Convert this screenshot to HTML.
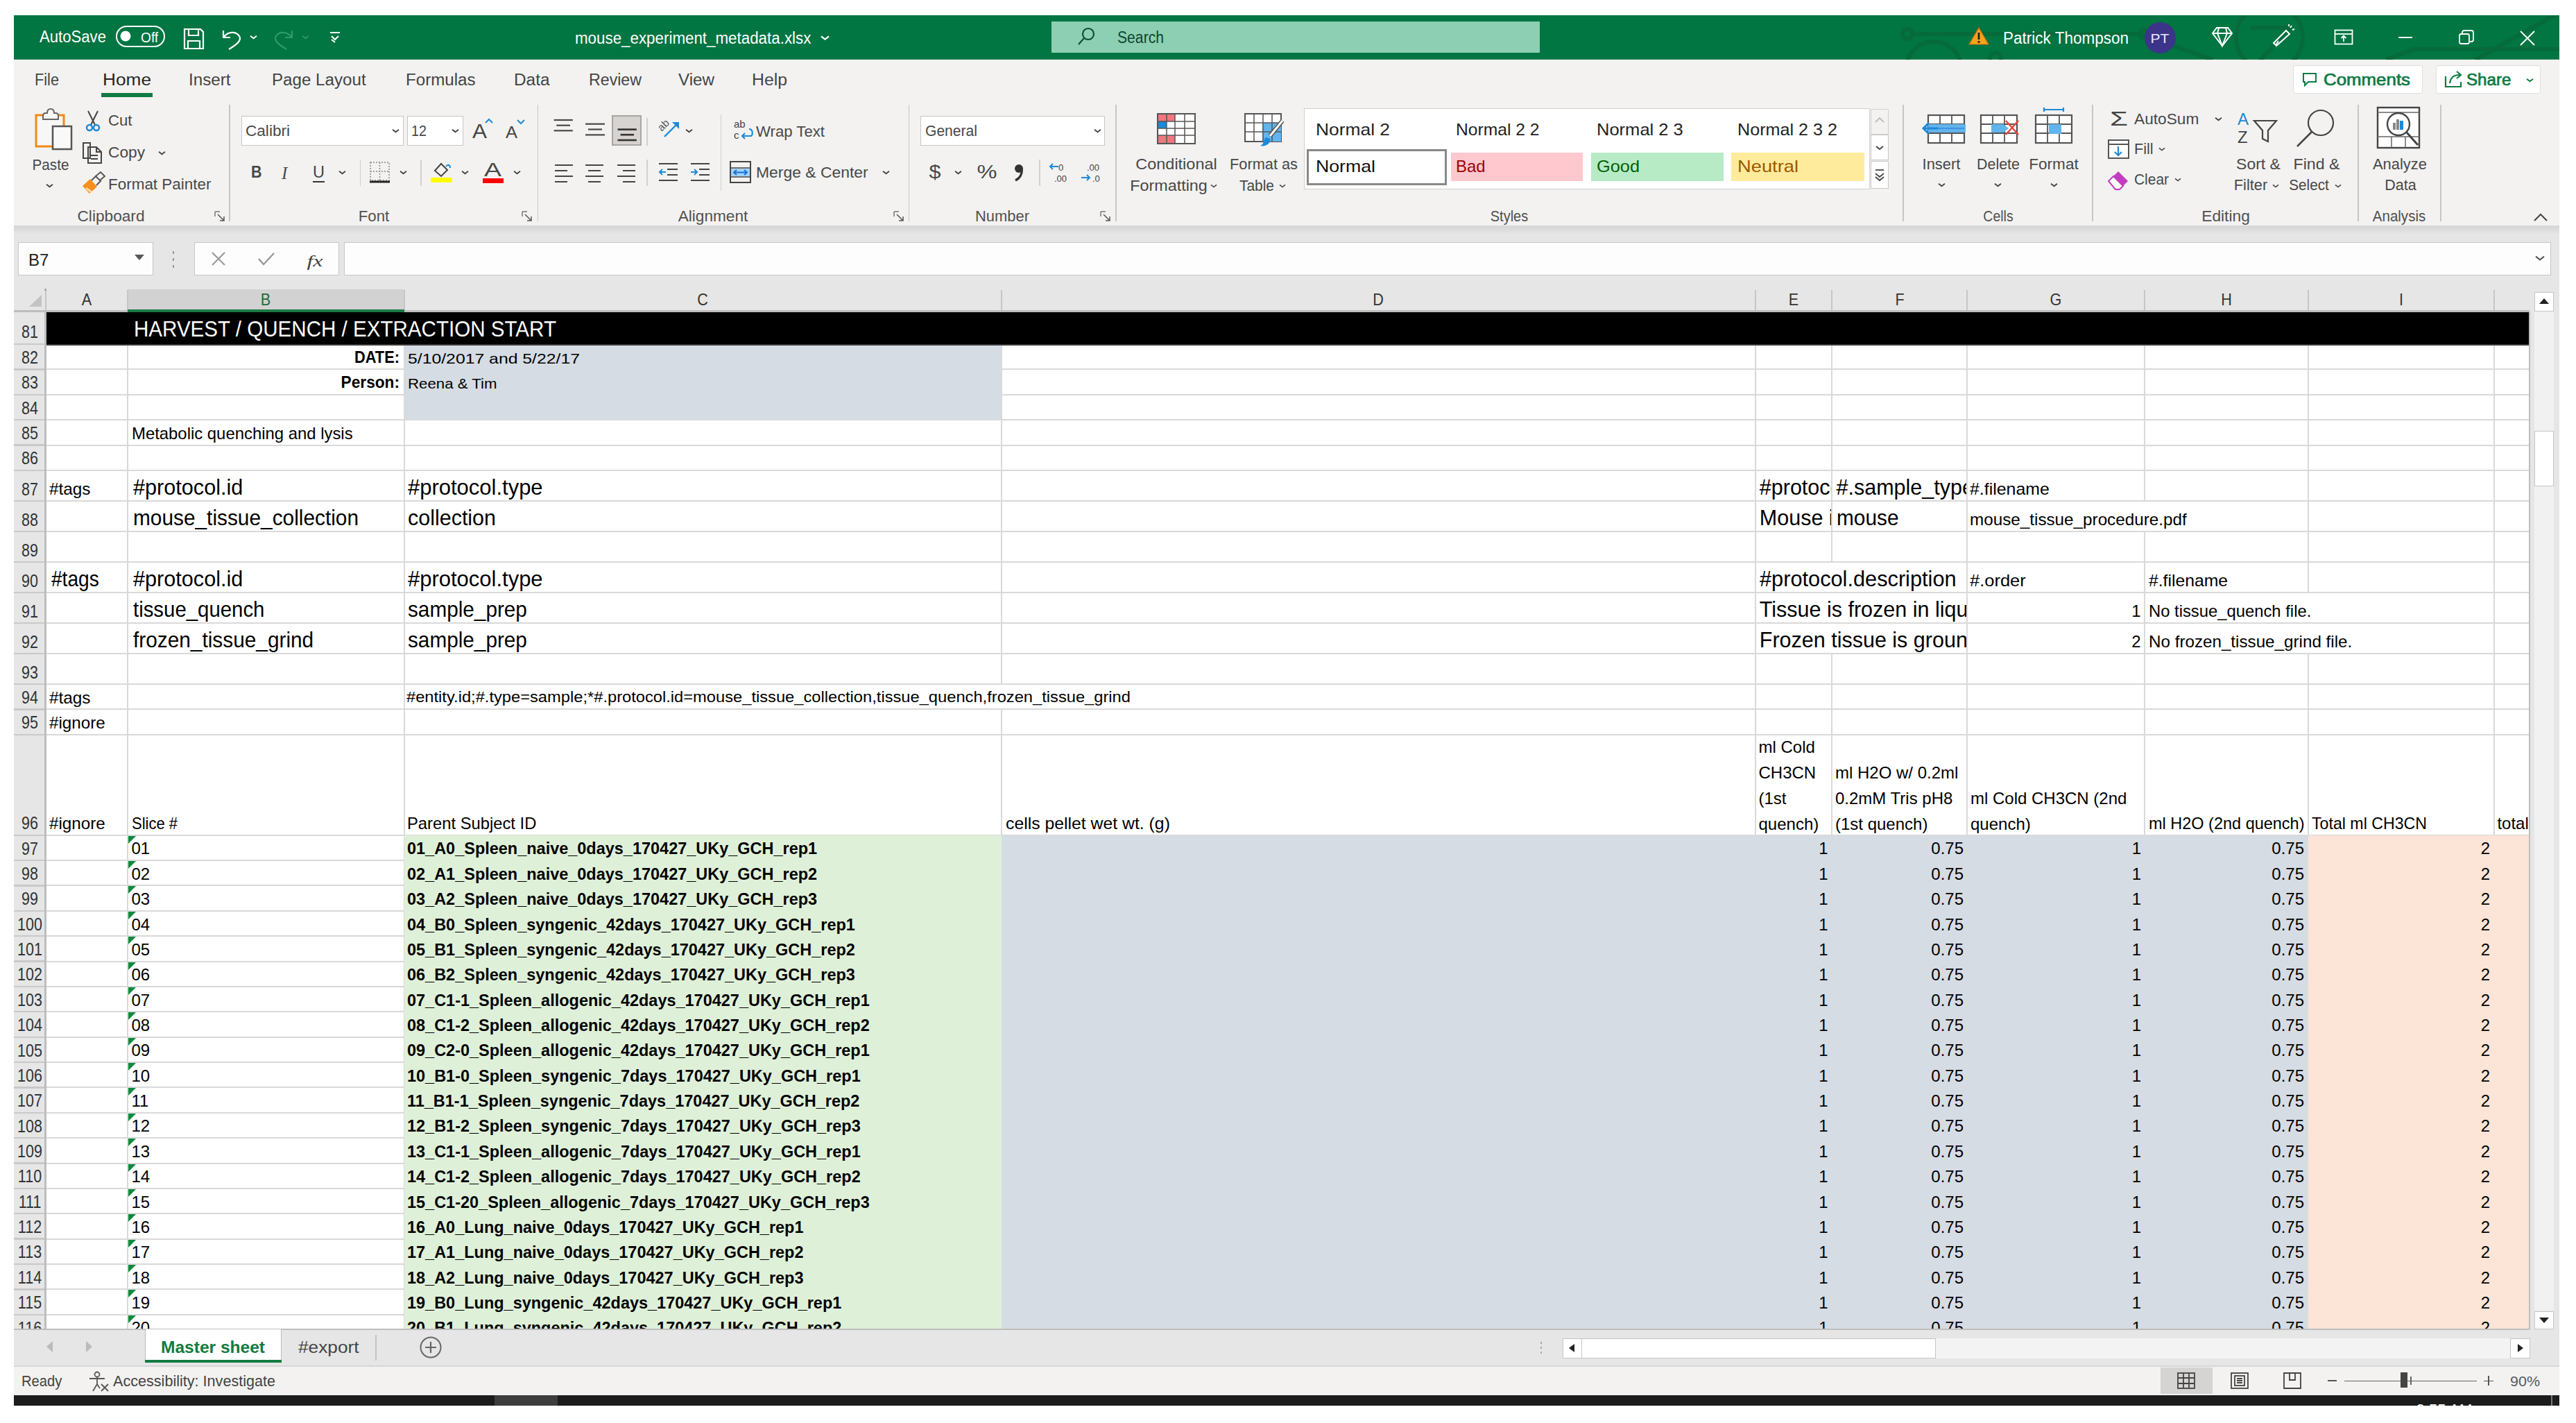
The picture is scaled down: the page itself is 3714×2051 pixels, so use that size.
<!DOCTYPE html><html><head><meta charset="utf-8"><title>Excel</title><style>
html,body{margin:0;padding:0;background:#fff;width:3714px;height:2051px;overflow:hidden;position:relative;font-family:'Liberation Sans', sans-serif;}
.a{position:absolute;}
.t{position:absolute;white-space:pre;font-family:'Liberation Sans', sans-serif;}
svg.a{overflow:visible}
</style></head><body><div class="a" style="left:20.0px;top:22.0px;width:3670.0px;height:64.0px;background:#017542;"></div>
<div class="a" style="left:20.0px;top:85.0px;width:3670.0px;height:1.0px;background:#2e8b5e;"></div>
<svg class="a" style="left:2700.0px;top:22.0px;overflow:hidden" width="990" height="64" viewBox="0 0 990 64">
      <g stroke="#066a3b" stroke-width="6" fill="none">
        <path d="M56 27 H385 L490 64"/><circle cx="50" cy="27" r="7"/><circle cx="391" cy="27" r="6"/>
        <circle cx="88" cy="78" r="40"/>
        <circle cx="177" cy="62" r="8"/>
        <circle cx="572" cy="32" r="48"/>
        <path d="M545 18 H600 L555 70"/>
        <path d="M869 64 L990 -4"/>
        <path d="M740 64 L780 49 H990"/>
      </g></svg>
<div class="t" style="left:57.0px;top:41.8px;font-size:23px;line-height:23px;color:#fff;transform:scaleX(0.9624);transform-origin:0 0;">AutoSave</div>
<div class="a" style="left:166.6px;top:36.5px;width:71.5px;height:31.0px;box-sizing:border-box;border:2px solid #fff;border-radius:16px;"></div>
<svg class="a" style="left:172.0px;top:43.0px;" width="18" height="18" viewBox="0 0 18 18"><circle cx="9" cy="9" r="7.5" fill="#fff"/></svg>
<div class="t" style="left:202.5px;top:44.0px;font-size:20px;line-height:20px;color:#fff;transform:scaleX(0.9577);transform-origin:0 0;">Off</div>
<svg class="a" style="left:264.0px;top:40.0px;" width="31" height="32" viewBox="0 0 31 32"><g fill="none" stroke="#fff" stroke-width="2.2"><path d="M2 2H25L29 6V30H2Z"/><path d="M8 2V11H22V2"/><path d="M7 30V19H24V30"/></g></svg>
<svg class="a" style="left:318.0px;top:40.0px;" width="32" height="32" viewBox="0 0 32 32"><g fill="none" stroke="#fff" stroke-width="2.2"><path d="M4 4V14H14"/><path d="M5 13C10 6 22 4 27 12C30 17 27 22 12 31"/></g></svg>
<svg class="a" style="left:359.1px;top:48.5px;" width="13.0" height="9.0" viewBox="0 0 13.0 9.0"><path d="M2 2.7 L6.5 6.3 L11.0 2.7" fill="none" stroke="#fff" stroke-width="1.8"/></svg>
<svg class="a" style="left:393.0px;top:40.0px;" width="32" height="32" viewBox="0 0 32 32"><g fill="none" stroke="#2f9a68" stroke-width="2.2"><path d="M28 4V14H18"/><path d="M27 13C22 6 10 4 5 12C2 17 5 22 20 31"/></g></svg>
<svg class="a" style="left:433.5px;top:48.5px;" width="13.0" height="9.0" viewBox="0 0 13.0 9.0"><path d="M2 2.7 L6.5 6.3 L11.0 2.7" fill="none" stroke="#2f9a68" stroke-width="1.8"/></svg>
<svg class="a" style="left:474.0px;top:44.0px;" width="18" height="18" viewBox="0 0 18 18"><g fill="none" stroke="#fff" stroke-width="2"><path d="M2 3H16"/><path d="M4 8L9 13L14 8"/><path d="M4 13L9 17"/></g></svg>
<div class="t" style="left:828.6px;top:43.5px;font-size:23px;line-height:23px;color:#fff;transform:scaleX(0.9717);transform-origin:0 0;">mouse_experiment_metadata.xlsx</div>
<svg class="a" style="left:1181.5px;top:48.5px;" width="15.0" height="11.0" viewBox="0 0 15.0 11.0"><path d="M2 3.3 L7.5 7.7 L13.0 3.3" fill="none" stroke="#fff" stroke-width="2.2"/></svg>
<div class="a" style="left:1515.5px;top:30.5px;width:704.5px;height:45.5px;background:#8ccfb2;"></div>
<svg class="a" style="left:1552.0px;top:38.0px;" width="30" height="30" viewBox="0 0 30 30"><g fill="none" stroke="#0e4d31" stroke-width="2.2"><circle cx="17" cy="11" r="8"/><path d="M11 17L3 26"/></g></svg>
<div class="t" style="left:1611.0px;top:42.5px;font-size:23px;line-height:23px;color:#0e4630;transform:scaleX(0.9194);transform-origin:0 0;">Search</div>
<svg class="a" style="left:2838.0px;top:38.0px;" width="30" height="28" viewBox="0 0 30 28"><path d="M15 2L29 26H1Z" fill="#f7a21b" stroke="#c96a10" stroke-width="1.2"/><rect x="13.6" y="9" width="2.8" height="10" fill="#222"/><rect x="13.6" y="21" width="2.8" height="2.8" fill="#222"/></svg>
<div class="t" style="left:2888.0px;top:43.5px;font-size:23px;line-height:23px;color:#fff;transform:scaleX(0.9787);transform-origin:0 0;">Patrick Thompson</div>
<svg class="a" style="left:3091.6px;top:31.6px;" width="45" height="45" viewBox="0 0 45 45"><circle cx="22.5" cy="22.5" r="22.5" fill="#3b3489"/></svg>
<div class="t" style="left:3114.0px;top:45.9px;font-size:19px;line-height:19px;color:#e8e6ff;transform:scaleX(1.1120) translateX(-50%);transform-origin:0 0;">PT</div>
<svg class="a" style="left:3188.0px;top:38.0px;" width="32" height="30" viewBox="0 0 32 30"><g fill="none" stroke="#fff" stroke-width="2"><path d="M8 2H24L30 10L16 28L2 10Z"/><path d="M2 10H30M11 2L9 10L16 28L23 10L21 2"/></g></svg>
<svg class="a" style="left:3276.0px;top:35.0px;" width="34" height="34" viewBox="0 0 34 34"><g fill="none" stroke="#fff" stroke-width="2"><path d="M6 31L2 27L20 9L25 14Z"/><path d="M5 30L9 24"/><path d="M26 5L28 2M29 8L32 7M24 3L24 0"/></g></svg>
<svg class="a" style="left:3365.0px;top:42.0px;" width="28" height="24" viewBox="0 0 28 24"><g fill="none" stroke="#fff" stroke-width="1.8"><rect x="1.5" y="1.5" width="25" height="20"/><path d="M1.5 7H26.5"/><path d="M14 18V10M10.5 13L14 9.5L17.5 13"/></g></svg>
<div class="a" style="left:3458.0px;top:53.0px;width:20.0px;height:1.8px;background:#fff;"></div>
<svg class="a" style="left:3544.0px;top:42.0px;" width="24" height="24" viewBox="0 0 24 24"><g fill="none" stroke="#fff" stroke-width="1.8"><rect x="2" y="7" width="14" height="14" rx="2.5"/><path d="M6 7V5C6 3 7 2 9 2H19C21 2 22 3 22 5V15C22 17 21 18 19 18H16"/></g></svg>
<svg class="a" style="left:3632.0px;top:43.0px;" width="24" height="24" viewBox="0 0 24 24"><g stroke="#fff" stroke-width="1.8"><path d="M2 2L22 22M22 2L2 22"/></g></svg>
<div class="a" style="left:20.0px;top:86.0px;width:3670.0px;height:240.0px;background:#f3f2f1;"></div>
<div class="a" style="left:20.0px;top:325.0px;width:3670.0px;height:1.5px;background:#dcdad8;"></div>
<div class="a" style="left:330.2px;top:151.0px;width:1.5px;height:168.0px;background:#c8c6c4;"></div>
<div class="a" style="left:774.8px;top:151.0px;width:1.5px;height:168.0px;background:#c8c6c4;"></div>
<div class="a" style="left:1309.7px;top:151.0px;width:1.5px;height:168.0px;background:#c8c6c4;"></div>
<div class="a" style="left:1608.2px;top:151.0px;width:1.5px;height:168.0px;background:#c8c6c4;"></div>
<div class="a" style="left:2743.2px;top:151.0px;width:1.5px;height:168.0px;background:#c8c6c4;"></div>
<div class="a" style="left:3016.2px;top:151.0px;width:1.5px;height:168.0px;background:#c8c6c4;"></div>
<div class="a" style="left:3399.2px;top:151.0px;width:1.5px;height:168.0px;background:#c8c6c4;"></div>
<div class="a" style="left:3518.2px;top:151.0px;width:1.5px;height:168.0px;background:#c8c6c4;"></div>
<div class="t" style="left:159.5px;top:301.3px;font-size:22px;line-height:22px;color:#505050;transform:scaleX(1.0300) translateX(-50%);transform-origin:0 0;">Clipboard</div>
<div class="t" style="left:539.0px;top:301.3px;font-size:22px;line-height:22px;color:#505050;transform:scaleX(1.0106) translateX(-50%);transform-origin:0 0;">Font</div>
<div class="t" style="left:1027.7px;top:301.3px;font-size:22px;line-height:22px;color:#505050;transform:scaleX(1.0271) translateX(-50%);transform-origin:0 0;">Alignment</div>
<div class="t" style="left:1445.0px;top:301.3px;font-size:22px;line-height:22px;color:#505050;transform:scaleX(0.9968) translateX(-50%);transform-origin:0 0;">Number</div>
<div class="t" style="left:2176.3px;top:301.3px;font-size:22px;line-height:22px;color:#505050;transform:scaleX(0.9095) translateX(-50%);transform-origin:0 0;">Styles</div>
<div class="t" style="left:2881.0px;top:301.3px;font-size:22px;line-height:22px;color:#505050;transform:scaleX(0.8874) translateX(-50%);transform-origin:0 0;">Cells</div>
<div class="t" style="left:3209.0px;top:301.3px;font-size:22px;line-height:22px;color:#505050;transform:scaleX(1.0345) translateX(-50%);transform-origin:0 0;">Editing</div>
<div class="t" style="left:3458.7px;top:301.3px;font-size:22px;line-height:22px;color:#505050;transform:scaleX(0.9338) translateX(-50%);transform-origin:0 0;">Analysis</div>
<svg class="a" style="left:309.0px;top:304.0px;" width="16" height="16" viewBox="0 0 16 16"><path d="M1 1H8M1 1V8" stroke="#777" stroke-width="1.5" fill="none"/><path d="M5 5L14 14M14 8V14H8" stroke="#555" stroke-width="1.5" fill="none"/></svg>
<svg class="a" style="left:752.0px;top:304.0px;" width="16" height="16" viewBox="0 0 16 16"><path d="M1 1H8M1 1V8" stroke="#777" stroke-width="1.5" fill="none"/><path d="M5 5L14 14M14 8V14H8" stroke="#555" stroke-width="1.5" fill="none"/></svg>
<svg class="a" style="left:1288.0px;top:304.0px;" width="16" height="16" viewBox="0 0 16 16"><path d="M1 1H8M1 1V8" stroke="#777" stroke-width="1.5" fill="none"/><path d="M5 5L14 14M14 8V14H8" stroke="#555" stroke-width="1.5" fill="none"/></svg>
<svg class="a" style="left:1586.0px;top:304.0px;" width="16" height="16" viewBox="0 0 16 16"><path d="M1 1H8M1 1V8" stroke="#777" stroke-width="1.5" fill="none"/><path d="M5 5L14 14M14 8V14H8" stroke="#555" stroke-width="1.5" fill="none"/></svg>
<svg class="a" style="left:48.0px;top:155.0px;" width="60" height="64" viewBox="0 0 60 64"><g>
      <rect x="4" y="11" width="40" height="45" fill="#f7f7f7" stroke="#f28a14" stroke-width="3"/>
      <path d="M14 17V12C14 9 16 8 18 8H20C20 4 22 2 25 2C28 2 30 4 30 8H32C34 8 36 9 36 12V17Z" fill="#f7f7f7" stroke="#666" stroke-width="2"/>
      <rect x="28" y="27" width="27" height="33" fill="#f9f9f9" stroke="#555" stroke-width="2.5"/>
    </g></svg>
<div class="t" style="left:73.0px;top:226.9px;font-size:22px;line-height:22px;color:#484848;transform:scaleX(0.9420) translateX(-50%);transform-origin:0 0;">Paste</div>
<svg class="a" style="left:65.1px;top:262.5px;" width="13.0" height="9.0" viewBox="0 0 13.0 9.0"><path d="M2 2.7 L6.5 6.3 L11.0 2.7" fill="none" stroke="#444" stroke-width="1.8"/></svg>
<svg class="a" style="left:122.0px;top:158.0px;" width="24" height="32" viewBox="0 0 24 32"><g fill="none" stroke="#444" stroke-width="2"><path d="M5 2L15 22M19 2L9 22"/></g><circle cx="7" cy="26" r="4" fill="none" stroke="#1c8ad8" stroke-width="2.5"/><circle cx="17" cy="26" r="4" fill="none" stroke="#1c8ad8" stroke-width="2.5"/></svg>
<div class="t" style="left:155.5px;top:162.8px;font-size:22px;line-height:22px;color:#484848;transform:scaleX(1.0073);transform-origin:0 0;">Cut</div>
<svg class="a" style="left:117.0px;top:203.0px;" width="34" height="34" viewBox="0 0 34 34"><g fill="none" stroke="#444" stroke-width="2"><path d="M3 3H13V25H3Z"/><path d="M10 9H22L29 16V32H10Z"/><path d="M22 9V16H29"/><path d="M14 21H24M14 26H24"/></g></svg>
<div class="t" style="left:155.5px;top:209.3px;font-size:22px;line-height:22px;color:#484848;transform:scaleX(1.0319);transform-origin:0 0;">Copy</div>
<svg class="a" style="left:226.5px;top:215.5px;" width="13.0" height="9.0" viewBox="0 0 13.0 9.0"><path d="M2 2.7 L6.5 6.3 L11.0 2.7" fill="none" stroke="#444" stroke-width="1.8"/></svg>
<svg class="a" style="left:118.0px;top:246.0px;" width="34" height="36" viewBox="0 0 34 36"><path d="M1 22L12 12L22 23L11 33Z" fill="#f7901e"/><path d="M6 25L14 31" stroke="#ffd9a8" stroke-width="3"/><g fill="none" stroke="#555" stroke-width="2"><path d="M14 14L20 8L27 15L21 21"/><path d="M20 8L27 2L33 8L26 14"/></g></svg>
<div class="t" style="left:155.5px;top:255.3px;font-size:22px;line-height:22px;color:#484848;transform:scaleX(1.0206);transform-origin:0 0;">Format Painter</div>
<div class="a" style="left:348.0px;top:167.0px;width:233.7px;height:42.6px;background:#fff;box-sizing:border-box;border:1.5px solid #c8c6c4;"></div>
<div class="t" style="left:354.0px;top:177.8px;font-size:22px;line-height:22px;color:#484848;transform:scaleX(1.0263);transform-origin:0 0;">Calibri</div>
<svg class="a" style="left:563.5px;top:183.5px;" width="13.0" height="9.0" viewBox="0 0 13.0 9.0"><path d="M2 2.7 L6.5 6.3 L11.0 2.7" fill="none" stroke="#444" stroke-width="1.8"/></svg>
<div class="a" style="left:587.0px;top:167.0px;width:81.4px;height:42.6px;background:#fff;box-sizing:border-box;border:1.5px solid #c8c6c4;"></div>
<div class="t" style="left:593.0px;top:177.8px;font-size:22px;line-height:22px;color:#484848;transform:scaleX(0.8985);transform-origin:0 0;">12</div>
<svg class="a" style="left:649.5px;top:183.5px;" width="13.0" height="9.0" viewBox="0 0 13.0 9.0"><path d="M2 2.7 L6.5 6.3 L11.0 2.7" fill="none" stroke="#444" stroke-width="1.8"/></svg>
<div class="t" style="left:681.0px;top:173.5px;font-size:30px;line-height:30px;color:#444;transform:scaleX(1.0492);transform-origin:0 0;">A</div>
<svg class="a" style="left:699.0px;top:170.0px;" width="12" height="8" viewBox="0 0 12 8"><path d="M1 7L6 2L11 7" fill="none" stroke="#1c8ad8" stroke-width="2"/></svg>
<div class="t" style="left:729.0px;top:178.6px;font-size:24px;line-height:24px;color:#444;transform:scaleX(1.0615);transform-origin:0 0;">A</div>
<svg class="a" style="left:745.0px;top:172.0px;" width="12" height="8" viewBox="0 0 12 8"><path d="M1 1L6 6L11 1" fill="none" stroke="#1c8ad8" stroke-width="2"/></svg>
<div class="t" style="left:362.0px;top:237.4px;font-size:23px;line-height:23px;color:#484848;font-weight:bold;transform:scaleX(0.9323);transform-origin:0 0;">B</div>
<div class="t" style="left:406.0px;top:236.8px;font-size:25px;line-height:25px;color:#484848;font-style:italic;font-family:'Liberation Serif',serif;">I</div>
<div class="t" style="left:451.0px;top:237.4px;font-size:23px;line-height:23px;color:#484848;transform:scaleX(1.0226);transform-origin:0 0;">U</div>
<div class="a" style="left:451.0px;top:261.0px;width:17.0px;height:1.8px;background:#333;"></div>
<svg class="a" style="left:486.5px;top:243.5px;" width="13.0" height="9.0" viewBox="0 0 13.0 9.0"><path d="M2 2.7 L6.5 6.3 L11.0 2.7" fill="none" stroke="#444" stroke-width="1.8"/></svg>
<div class="a" style="left:518.9px;top:230.0px;width:1.5px;height:38.0px;background:#d2d0ce;"></div>
<svg class="a" style="left:532.0px;top:232.0px;" width="32" height="33" viewBox="0 0 32 33"><g fill="none" stroke="#888" stroke-width="1.5" stroke-dasharray="2 2"><rect x="2" y="2" width="27" height="26"/><path d="M15.5 2V28M2 15H29"/></g><path d="M1 30H30" stroke="#222" stroke-width="3"/></svg>
<svg class="a" style="left:575.2px;top:243.5px;" width="13.0" height="9.0" viewBox="0 0 13.0 9.0"><path d="M2 2.7 L6.5 6.3 L11.0 2.7" fill="none" stroke="#444" stroke-width="1.8"/></svg>
<div class="a" style="left:606.2px;top:230.0px;width:1.5px;height:38.0px;background:#d2d0ce;"></div>
<svg class="a" style="left:621.0px;top:230.0px;" width="32" height="36" viewBox="0 0 32 36"><g fill="none" stroke="#444" stroke-width="2"><path d="M6 16L15 6L24 15L15 24Z"/></g><path d="M22 10C25 6 28 8 28 12" fill="none" stroke="#1c8ad8" stroke-width="2"/><rect x="0" y="26" width="31" height="7" fill="#ffff00"/></svg>
<svg class="a" style="left:663.5px;top:243.5px;" width="13.0" height="9.0" viewBox="0 0 13.0 9.0"><path d="M2 2.7 L6.5 6.3 L11.0 2.7" fill="none" stroke="#444" stroke-width="1.8"/></svg>
<div class="t" style="left:698.0px;top:232.1px;font-size:27px;line-height:27px;color:#484848;transform:scaleX(1.3877);transform-origin:0 0;">A</div>
<div class="a" style="left:696.0px;top:256.8px;width:30.0px;height:7.0px;background:#ff0000;"></div>
<svg class="a" style="left:738.5px;top:243.5px;" width="13.0" height="9.0" viewBox="0 0 13.0 9.0"><path d="M2 2.7 L6.5 6.3 L11.0 2.7" fill="none" stroke="#444" stroke-width="1.8"/></svg>
<svg class="a" style="left:0.0px;top:0.0px;" width="1" height="1" viewBox="0 0 1 1"><path d="M798.6 173H825.8" stroke="#484848" stroke-width="2.2"/><path d="M802.3 180.7H822" stroke="#484848" stroke-width="2.2"/><path d="M798.6 188.3H825.8" stroke="#484848" stroke-width="2.2"/></svg>
<svg class="a" style="left:0.0px;top:0.0px;" width="1" height="1" viewBox="0 0 1 1"><path d="M844 178.7H872" stroke="#484848" stroke-width="2.2"/><path d="M848 186.5H868" stroke="#484848" stroke-width="2.2"/><path d="M844 194.4H872" stroke="#484848" stroke-width="2.2"/></svg>
<div class="a" style="left:882.4px;top:166.0px;width:43.0px;height:44.0px;background:#d6d3d0;box-sizing:border-box;border:2.5px solid #a8a6a4;"></div>
<svg class="a" style="left:0.0px;top:0.0px;" width="1" height="1" viewBox="0 0 1 1"><path d="M890.5 186.6H917.8" stroke="#333" stroke-width="2.6"/><path d="M894.6 194.2H914" stroke="#333" stroke-width="2.6"/><path d="M890.5 202H917.8" stroke="#333" stroke-width="2.6"/></svg>
<div class="a" style="left:932.2px;top:170.0px;width:1.5px;height:40.0px;background:#d2d0ce;"></div>
<svg class="a" style="left:946.0px;top:166.0px;" width="40" height="36" viewBox="0 0 40 36"><text x="0" y="0" font-size="15" fill="#555" font-family="Liberation Sans" transform="translate(8,24) rotate(-45)">ab</text><path d="M12 31L31 12" fill="none" stroke="#1c8ad8" stroke-width="2.4"/><path d="M23 10H33V20Z" fill="#1c8ad8"/></svg>
<svg class="a" style="left:986.5px;top:183.5px;" width="13.0" height="9.0" viewBox="0 0 13.0 9.0"><path d="M2 2.7 L6.5 6.3 L11.0 2.7" fill="none" stroke="#444" stroke-width="1.8"/></svg>
<div class="a" style="left:1038.8px;top:165.0px;width:1.5px;height:110.0px;background:#d2d0ce;"></div>
<svg class="a" style="left:1056.0px;top:170.0px;" width="32" height="36" viewBox="0 0 32 36"><text x="2" y="14" font-size="15" fill="#444" font-family="Liberation Sans">ab</text><text x="2" y="30" font-size="15" fill="#444" font-family="Liberation Sans">c</text><path d="M14 26H26C30 26 30 16 24 16" fill="none" stroke="#1c8ad8" stroke-width="2.2"/><path d="M18 22L14 26L18 30" fill="none" stroke="#1c8ad8" stroke-width="2.2"/></svg>
<div class="t" style="left:1090.0px;top:179.3px;font-size:22px;line-height:22px;color:#484848;transform:scaleX(1.0078);transform-origin:0 0;">Wrap Text</div>
<svg class="a" style="left:800.0px;top:236.0px;" width="30" height="30" viewBox="0 0 30 30"><path d="M0 2H26" stroke="#444" stroke-width="2"/><path d="M0 10H18" stroke="#444" stroke-width="2"/><path d="M0 18H26" stroke="#444" stroke-width="2"/><path d="M0 26H18" stroke="#444" stroke-width="2"/></svg>
<svg class="a" style="left:844.0px;top:236.0px;" width="30" height="30" viewBox="0 0 30 30"><path d="M0 2H26" stroke="#444" stroke-width="2"/><path d="M4 10H22" stroke="#444" stroke-width="2"/><path d="M0 18H26" stroke="#444" stroke-width="2"/><path d="M4 26H22" stroke="#444" stroke-width="2"/></svg>
<svg class="a" style="left:890.0px;top:236.0px;" width="30" height="30" viewBox="0 0 30 30"><path d="M0 2H26" stroke="#444" stroke-width="2"/><path d="M8 10H26" stroke="#444" stroke-width="2"/><path d="M0 18H26" stroke="#444" stroke-width="2"/><path d="M8 26H26" stroke="#444" stroke-width="2"/></svg>
<div class="a" style="left:932.2px;top:230.0px;width:1.5px;height:38.0px;background:#d2d0ce;"></div>
<svg class="a" style="left:950.0px;top:234.0px;" width="30" height="30" viewBox="0 0 30 30"><g stroke="#444" stroke-width="2"><path d="M0 2H27M12 10H27M12 18H27M0 26H27"/></g><path d="M10 14H1M5 10L1 14L5 18" fill="none" stroke="#1c8ad8" stroke-width="2"/></svg>
<svg class="a" style="left:996.0px;top:234.0px;" width="30" height="30" viewBox="0 0 30 30"><g stroke="#444" stroke-width="2"><path d="M0 2H27M12 10H27M12 18H27M0 26H27"/></g><path d="M0 14H9M5 10L9 14L5 18" fill="none" stroke="#1c8ad8" stroke-width="2"/></svg>
<svg class="a" style="left:1051.0px;top:231.0px;" width="33" height="35" viewBox="0 0 33 35"><rect x="2" y="2" width="29" height="30" fill="none" stroke="#444" stroke-width="2"/><path d="M2 11H31M2 24H31" stroke="#444" stroke-width="1.5"/><rect x="3" y="12" width="27" height="11" fill="#9fd3f5"/><path d="M7 17.5H26M11 14L7 17.5L11 21M22 14L26 17.5L22 21" fill="none" stroke="#1c6fd8" stroke-width="2"/></svg>
<div class="t" style="left:1090.0px;top:238.3px;font-size:22px;line-height:22px;color:#484848;transform:scaleX(1.0406);transform-origin:0 0;">Merge &amp; Center</div>
<svg class="a" style="left:1270.5px;top:243.5px;" width="13.0" height="9.0" viewBox="0 0 13.0 9.0"><path d="M2 2.7 L6.5 6.3 L11.0 2.7" fill="none" stroke="#444" stroke-width="1.8"/></svg>
<div class="a" style="left:1327.0px;top:166.5px;width:266.0px;height:43.0px;background:#fff;box-sizing:border-box;border:1.5px solid #c8c6c4;"></div>
<div class="t" style="left:1333.6px;top:177.8px;font-size:22px;line-height:22px;color:#484848;transform:scaleX(0.9581);transform-origin:0 0;">General</div>
<svg class="a" style="left:1575.5px;top:183.5px;" width="13.0" height="9.0" viewBox="0 0 13.0 9.0"><path d="M2 2.7 L6.5 6.3 L11.0 2.7" fill="none" stroke="#444" stroke-width="1.8"/></svg>
<div class="t" style="left:1348.0px;top:235.1px;font-size:27px;line-height:27px;color:#484848;transform:scaleX(1.1310) translateX(-50%);transform-origin:0 0;">$</div>
<svg class="a" style="left:1374.5px;top:243.5px;" width="13.0" height="9.0" viewBox="0 0 13.0 9.0"><path d="M2 2.7 L6.5 6.3 L11.0 2.7" fill="none" stroke="#444" stroke-width="1.8"/></svg>
<div class="t" style="left:1422.5px;top:235.1px;font-size:27px;line-height:27px;color:#484848;transform:scaleX(1.2075) translateX(-50%);transform-origin:0 0;">%</div>
<svg class="a" style="left:1461.0px;top:236.0px;" width="16" height="26" viewBox="0 0 16 26"><circle cx="8" cy="7" r="6" fill="#333"/><path d="M12 8C13 15 9 21 3 24" fill="none" stroke="#333" stroke-width="3.5"/></svg>
<div class="a" style="left:1498.2px;top:230.0px;width:1.5px;height:38.0px;background:#d2d0ce;"></div>
<svg class="a" style="left:1512.0px;top:232.0px;" width="34" height="34" viewBox="0 0 34 34"><text x="14" y="14" font-size="13" fill="#444" font-family="Liberation Sans">0</text><text x="8" y="30" font-size="13" fill="#444" font-family="Liberation Sans">.00</text><path d="M14 8H2M6 4L2 8L6 12" fill="none" stroke="#1c8ad8" stroke-width="2"/></svg>
<svg class="a" style="left:1557.0px;top:232.0px;" width="34" height="34" viewBox="0 0 34 34"><text x="10" y="14" font-size="13" fill="#444" font-family="Liberation Sans">.00</text><text x="18" y="30" font-size="13" fill="#444" font-family="Liberation Sans">.0</text><path d="M2 24H14M10 20L14 24L10 28" fill="none" stroke="#1c8ad8" stroke-width="2"/></svg>
<svg class="a" style="left:1667.0px;top:162.0px;" width="58" height="48" viewBox="0 0 58 48"><g>
      <rect x="2" y="2" width="54" height="43" fill="#fff" stroke="#555" stroke-width="2"/>
      <rect x="3" y="3" width="24" height="10" fill="#f0767f"/><rect x="3" y="33" width="24" height="11" fill="#f0767f"/>
      <rect x="3" y="13" width="12" height="10" fill="#1c8ad8"/>
      <path d="M2 13H56M2 23H56M2 33H56M15 2V45M27 2V45M41 2V45" stroke="#555" stroke-width="1.5"/>
    </g></svg>
<div class="t" style="left:1695.8px;top:226.3px;font-size:22px;line-height:22px;color:#484848;transform:scaleX(1.0665) translateX(-50%);transform-origin:0 0;">Conditional</div>
<div class="t" style="left:1685.0px;top:257.3px;font-size:22px;line-height:22px;color:#484848;transform:scaleX(1.0613) translateX(-50%);transform-origin:0 0;">Formatting</div>
<svg class="a" style="left:1744.0px;top:264.0px;" width="12" height="8" viewBox="0 0 12 8"><path d="M2 2.4 L6 5.6 L10 2.4" fill="none" stroke="#444" stroke-width="1.6"/></svg>
<svg class="a" style="left:1793.0px;top:162.0px;" width="62" height="50" viewBox="0 0 62 50"><g>
      <rect x="2" y="2" width="52" height="40" fill="#fff" stroke="#555" stroke-width="2"/>
      <rect x="27" y="15" width="27" height="27" fill="#62b4ec"/>
      <path d="M2 15H54M2 28H54M15 2V42M28 2V42M41 2V42" stroke="#555" stroke-width="1.5"/>
      <path d="M56 12L38 34" stroke="#555" stroke-width="6"/><path d="M56 12L38 34" stroke="#fff" stroke-width="3"/>
      <path d="M32 36C28 40 30 46 24 48C32 50 40 44 38 38Z" fill="#1c8ad8"/>
    </g></svg>
<div class="t" style="left:1822.0px;top:226.3px;font-size:22px;line-height:22px;color:#484848;transform:scaleX(0.9896) translateX(-50%);transform-origin:0 0;">Format as</div>
<div class="t" style="left:1812.0px;top:257.3px;font-size:22px;line-height:22px;color:#484848;transform:scaleX(0.9507) translateX(-50%);transform-origin:0 0;">Table</div>
<svg class="a" style="left:1843.0px;top:264.0px;" width="12" height="8" viewBox="0 0 12 8"><path d="M2 2.4 L6 5.6 L10 2.4" fill="none" stroke="#444" stroke-width="1.6"/></svg>
<div class="a" style="left:1880.0px;top:155.6px;width:816.0px;height:117.4px;background:#fff;box-sizing:border-box;border:1.5px solid #d2d0ce;"></div>
<div class="t" style="left:1897.0px;top:175.1px;font-size:24px;line-height:24px;color:#222;transform:scaleX(1.0990);transform-origin:0 0;">Normal 2</div>
<div class="t" style="left:2099.0px;top:175.1px;font-size:24px;line-height:24px;color:#222;transform:scaleX(1.0266);transform-origin:0 0;">Normal 2 2</div>
<div class="t" style="left:2302.0px;top:175.1px;font-size:24px;line-height:24px;color:#222;transform:scaleX(1.0633);transform-origin:0 0;">Normal 2 3</div>
<div class="t" style="left:2505.0px;top:175.1px;font-size:24px;line-height:24px;color:#222;transform:scaleX(1.0481);transform-origin:0 0;">Normal 2 3 2</div>
<div class="a" style="left:1884.0px;top:215.0px;width:202.0px;height:52.0px;background:#fff;box-sizing:border-box;border:3px solid #8a8886;"></div>
<div class="t" style="left:1897.0px;top:227.6px;font-size:24px;line-height:24px;color:#111;transform:scaleX(1.1119);transform-origin:0 0;">Normal</div>
<div class="a" style="left:2092.0px;top:220.0px;width:190.0px;height:41.4px;background:#ffc7ce;"></div>
<div class="t" style="left:2099.0px;top:227.6px;font-size:24px;line-height:24px;color:#9c0006;transform:scaleX(0.9952);transform-origin:0 0;">Bad</div>
<div class="a" style="left:2294.0px;top:220.0px;width:191.0px;height:41.4px;background:#b7ebc6;"></div>
<div class="t" style="left:2302.0px;top:227.6px;font-size:24px;line-height:24px;color:#006100;transform:scaleX(1.0559);transform-origin:0 0;">Good</div>
<div class="a" style="left:2496.0px;top:220.0px;width:192.0px;height:41.4px;background:#ffeb9c;"></div>
<div class="t" style="left:2505.0px;top:227.6px;font-size:24px;line-height:24px;color:#9c5700;transform:scaleX(1.1373);transform-origin:0 0;">Neutral</div>
<div class="a" style="left:2697.0px;top:157.0px;width:26.0px;height:36.6px;background:#f3f2f1;box-sizing:border-box;border:1.5px solid #d2d0ce;"></div>
<svg class="a" style="left:2702.0px;top:168.0px;" width="16" height="10" viewBox="0 0 16 10"><path d="M2 8L8 2L14 8" fill="none" stroke="#bbb" stroke-width="1.8"/></svg>
<div class="a" style="left:2697.0px;top:193.6px;width:26.0px;height:37.9px;background:#fff;box-sizing:border-box;border:1.5px solid #c8c6c4;"></div>
<svg class="a" style="left:2703.0px;top:207.5px;" width="14" height="10" viewBox="0 0 14 10"><path d="M2 3.0 L7 7.0 L12 3.0" fill="none" stroke="#444" stroke-width="1.8"/></svg>
<div class="a" style="left:2697.0px;top:231.5px;width:26.0px;height:40.2px;background:#fff;box-sizing:border-box;border:1.5px solid #c8c6c4;"></div>
<svg class="a" style="left:2702.0px;top:243.0px;" width="16" height="18" viewBox="0 0 16 18"><path d="M2 2H14" stroke="#444" stroke-width="1.8"/><path d="M2 7L8 12L14 7M2 12L8 17L14 12" fill="none" stroke="#444" stroke-width="1.8"/></svg>
<svg class="a" style="left:2770.0px;top:162.0px;" width="66" height="48" viewBox="0 0 66 48"><g transform="translate(8,2)"><rect x="2" y="2" width="52" height="40" fill="#fff" stroke="#555" stroke-width="2.2"/><path d="M2 15H54M2 28H54M19 2V42M36 2V42" stroke="#555" stroke-width="1.8"/></g><rect x="10" y="17" width="54" height="12" fill="#62b4ec"/><path d="M10 23H62" stroke="#1c6fd8" stroke-width="1"/><path d="M24 23H3M11 15L3 23L11 31" fill="none" stroke="#1c8ad8" stroke-width="3"/></svg>
<svg class="a" style="left:2852.0px;top:162.0px;" width="62" height="48" viewBox="0 0 62 48"><g transform="translate(2,2)"><rect x="2" y="2" width="52" height="40" fill="#fff" stroke="#555" stroke-width="2.2"/><path d="M2 15H54M2 28H54M19 2V42M36 2V42" stroke="#555" stroke-width="1.8"/></g><rect x="19" y="17" width="18" height="12" fill="#62b4ec"/><path d="M36 17L44 23L36 29" fill="#62b4ec"/><path d="M40 12L58 32M58 12L40 32" stroke="#e8443a" stroke-width="2.5"/></svg>
<svg class="a" style="left:2933.0px;top:154.0px;" width="58" height="56" viewBox="0 0 58 56"><path d="M14 4H42M14 1V7M42 1V7" stroke="#1c8ad8" stroke-width="2.2"/><g transform="translate(0,10)"><rect x="2" y="2" width="52" height="40" fill="#fff" stroke="#555" stroke-width="2.2"/><path d="M2 15H54M2 28H54M19 2V42M36 2V42" stroke="#555" stroke-width="1.8"/></g><rect x="21" y="25" width="18" height="14" fill="#62b4ec"/></svg>
<div class="t" style="left:2799.4px;top:226.3px;font-size:22px;line-height:22px;color:#484848;transform:scaleX(0.9958) translateX(-50%);transform-origin:0 0;">Insert</div>
<svg class="a" style="left:2792.9px;top:261.5px;" width="13.0" height="9.0" viewBox="0 0 13.0 9.0"><path d="M2 2.7 L6.5 6.3 L11.0 2.7" fill="none" stroke="#444" stroke-width="1.8"/></svg>
<div class="t" style="left:2880.5px;top:226.3px;font-size:22px;line-height:22px;color:#484848;transform:scaleX(0.9718) translateX(-50%);transform-origin:0 0;">Delete</div>
<svg class="a" style="left:2874.0px;top:261.5px;" width="13.0" height="9.0" viewBox="0 0 13.0 9.0"><path d="M2 2.7 L6.5 6.3 L11.0 2.7" fill="none" stroke="#444" stroke-width="1.8"/></svg>
<div class="t" style="left:2961.3px;top:226.3px;font-size:22px;line-height:22px;color:#484848;transform:scaleX(1.0246) translateX(-50%);transform-origin:0 0;">Format</div>
<svg class="a" style="left:2954.8px;top:261.5px;" width="13.0" height="9.0" viewBox="0 0 13.0 9.0"><path d="M2 2.7 L6.5 6.3 L11.0 2.7" fill="none" stroke="#444" stroke-width="1.8"/></svg>
<div class="t" style="left:3042.0px;top:155.5px;font-size:30px;line-height:30px;color:#444;transform:scaleX(1.4019);transform-origin:0 0;">Σ</div>
<div class="t" style="left:3076.7px;top:160.8px;font-size:22px;line-height:22px;color:#484848;transform:scaleX(1.0309);transform-origin:0 0;">AutoSum</div>
<svg class="a" style="left:3191.5px;top:167.0px;" width="13.0" height="9.0" viewBox="0 0 13.0 9.0"><path d="M2 2.7 L6.5 6.3 L11.0 2.7" fill="none" stroke="#444" stroke-width="1.8"/></svg>
<svg class="a" style="left:3038.0px;top:200.0px;" width="34" height="30" viewBox="0 0 34 30"><rect x="2" y="2" width="29" height="26" fill="#fff" stroke="#555" stroke-width="2"/><path d="M2 8H31" stroke="#555" stroke-width="2"/><path d="M16 11V24M11 19L16 24L21 19" fill="none" stroke="#1c8ad8" stroke-width="2.2"/></svg>
<div class="t" style="left:3076.8px;top:204.1px;font-size:22px;line-height:22px;color:#484848;transform:scaleX(0.9783);transform-origin:0 0;">Fill</div>
<svg class="a" style="left:3111.0px;top:210.8px;" width="12" height="8" viewBox="0 0 12 8"><path d="M2 2.4 L6 5.6 L10 2.4" fill="none" stroke="#444" stroke-width="1.6"/></svg>
<svg class="a" style="left:3038.0px;top:243.0px;" width="34" height="32" viewBox="0 0 34 32"><path d="M2 18L16 4L30 18L18 30H12Z" fill="#c23dbf"/><path d="M9 11L23 25L18 30H12L2 18Z" fill="#fff" stroke="#c23dbf" stroke-width="2"/></svg>
<div class="t" style="left:3076.8px;top:248.3px;font-size:22px;line-height:22px;color:#484848;transform:scaleX(0.9510);transform-origin:0 0;">Clear</div>
<svg class="a" style="left:3134.0px;top:255.0px;" width="12" height="8" viewBox="0 0 12 8"><path d="M2 2.4 L6 5.6 L10 2.4" fill="none" stroke="#444" stroke-width="1.6"/></svg>
<svg class="a" style="left:3226.0px;top:158.0px;" width="60" height="56" viewBox="0 0 60 56"><text x="0" y="22" font-size="24" fill="#1c8ad8" font-family="Liberation Sans">A</text><text x="0" y="48" font-size="24" fill="#444" font-family="Liberation Sans">Z</text><path d="M24 16H56L44 30V46L36 42V30Z" fill="none" stroke="#444" stroke-width="2.2"/></svg>
<div class="t" style="left:3255.5px;top:226.3px;font-size:22px;line-height:22px;color:#484848;transform:scaleX(1.0435) translateX(-50%);transform-origin:0 0;">Sort &amp;</div>
<div class="t" style="left:3244.7px;top:256.3px;font-size:22px;line-height:22px;color:#484848;transform:scaleX(0.9900) translateX(-50%);transform-origin:0 0;">Filter</div>
<svg class="a" style="left:3275.0px;top:264.0px;" width="12" height="8" viewBox="0 0 12 8"><path d="M2 2.4 L6 5.6 L10 2.4" fill="none" stroke="#444" stroke-width="1.6"/></svg>
<svg class="a" style="left:3308.0px;top:156.0px;" width="62" height="58" viewBox="0 0 62 58"><circle cx="38" cy="21" r="18" fill="none" stroke="#444" stroke-width="2.2"/><path d="M25 34L4 55" stroke="#444" stroke-width="2.5"/></svg>
<div class="t" style="left:3339.7px;top:226.3px;font-size:22px;line-height:22px;color:#484848;transform:scaleX(1.0536) translateX(-50%);transform-origin:0 0;">Find &amp;</div>
<div class="t" style="left:3329.2px;top:256.3px;font-size:22px;line-height:22px;color:#484848;transform:scaleX(0.9418) translateX(-50%);transform-origin:0 0;">Select</div>
<svg class="a" style="left:3365.0px;top:264.0px;" width="12" height="8" viewBox="0 0 12 8"><path d="M2 2.4 L6 5.6 L10 2.4" fill="none" stroke="#444" stroke-width="1.6"/></svg>
<svg class="a" style="left:3426.0px;top:153.0px;" width="66" height="64" viewBox="0 0 66 64"><rect x="2" y="2" width="60" height="58" fill="#fff" stroke="#444" stroke-width="2.4"/>
      <path d="M2 9H62M2 44H62M22 44V60M42 44V60" stroke="#666" stroke-width="1.5"/>
      <circle cx="32" cy="26" r="16" fill="#fff" stroke="#444" stroke-width="2.4"/>
      <rect x="24" y="24" width="4" height="10" fill="#888"/><rect x="29" y="19" width="4" height="15" fill="#888"/><rect x="34" y="21" width="5" height="13" fill="#1c8ad8"/>
      <path d="M44 38L60 56" stroke="#444" stroke-width="3"/></svg>
<div class="t" style="left:3460.0px;top:226.3px;font-size:22px;line-height:22px;color:#484848;transform:scaleX(0.9964) translateX(-50%);transform-origin:0 0;">Analyze</div>
<div class="t" style="left:3460.7px;top:256.3px;font-size:22px;line-height:22px;color:#484848;transform:scaleX(0.9788) translateX(-50%);transform-origin:0 0;">Data</div>
<svg class="a" style="left:3652.0px;top:306.0px;" width="22" height="14" viewBox="0 0 22 14"><path d="M2 12L11 3L20 12" fill="none" stroke="#444" stroke-width="2"/></svg>
<div class="t" style="left:50.0px;top:104.2px;font-size:23px;line-height:23px;color:#444;transform:scaleX(0.9444);transform-origin:0 0;">File</div>
<div class="t" style="left:148.0px;top:104.2px;font-size:23px;line-height:23px;color:#262626;transform:scaleX(1.1408);transform-origin:0 0;">Home</div>
<div class="t" style="left:272.0px;top:104.2px;font-size:23px;line-height:23px;color:#444;transform:scaleX(1.0516);transform-origin:0 0;">Insert</div>
<div class="t" style="left:392.0px;top:104.2px;font-size:23px;line-height:23px;color:#444;transform:scaleX(1.0498);transform-origin:0 0;">Page Layout</div>
<div class="t" style="left:585.0px;top:104.2px;font-size:23px;line-height:23px;color:#444;transform:scaleX(1.0484);transform-origin:0 0;">Formulas</div>
<div class="t" style="left:741.0px;top:104.2px;font-size:23px;line-height:23px;color:#444;transform:scaleX(1.0598);transform-origin:0 0;">Data</div>
<div class="t" style="left:849.0px;top:104.2px;font-size:23px;line-height:23px;color:#444;transform:scaleX(1.0077);transform-origin:0 0;">Review</div>
<div class="t" style="left:978.0px;top:104.2px;font-size:23px;line-height:23px;color:#444;transform:scaleX(1.0518);transform-origin:0 0;">View</div>
<div class="t" style="left:1084.0px;top:104.2px;font-size:23px;line-height:23px;color:#444;transform:scaleX(1.0779);transform-origin:0 0;">Help</div>
<div class="a" style="left:146.0px;top:134.0px;width:74.0px;height:5.5px;background:#107c41;"></div>
<div class="a" style="left:3306.0px;top:93.7px;width:186.5px;height:41.5px;background:#fff;box-sizing:border-box;border:1.5px solid #e1dfdd;border-radius:3px;"></div>
<svg class="a" style="left:3318.0px;top:103.0px;" width="24" height="24" viewBox="0 0 24 24"><path d="M3 3H21V15H10L5 20V15H3Z" fill="none" stroke="#0f7a45" stroke-width="2"/></svg>
<div class="t" style="left:3349.6px;top:104.0px;font-size:23px;line-height:23px;color:#0f7a45;transform:scaleX(1.1241);transform-origin:0 0;-webkit-text-stroke:0.7px #0f7a45;">Comments</div>
<div class="a" style="left:3512.0px;top:93.7px;width:150.5px;height:41.5px;background:#fff;box-sizing:border-box;border:1.5px solid #e1dfdd;border-radius:3px;"></div>
<svg class="a" style="left:3523.0px;top:98.0px;" width="30" height="30" viewBox="0 0 30 30"><g fill="none" stroke="#107c41" stroke-width="2.2"><path d="M3 12V27H25V20"/><path d="M9 22C10 14 15 10 23 10"/><path d="M19 5L25 10L19 15"/></g></svg>
<div class="t" style="left:3556.0px;top:104.0px;font-size:23px;line-height:23px;color:#0f7a45;transform:scaleX(1.0509);transform-origin:0 0;-webkit-text-stroke:0.7px #0f7a45;">Share</div>
<svg class="a" style="left:3640.5px;top:110.5px;" width="13.0" height="9.0" viewBox="0 0 13.0 9.0"><path d="M2 2.7 L6.5 6.3 L11.0 2.7" fill="none" stroke="#107c41" stroke-width="2"/></svg>
<div class="a" style="left:20.0px;top:326.0px;width:3670.0px;height:92.0px;background:#e6e6e6;"></div>
<div class="a" style="left:20.0px;top:326.0px;width:3670.0px;height:12.0px;background:linear-gradient(#d6d6d6,#e6e6e6);"></div>
<div class="a" style="left:26.4px;top:348.5px;width:194.6px;height:48.7px;background:#fdfdfd;box-sizing:border-box;border:1.5px solid #c6c6c6;"></div>
<div class="t" style="left:40.7px;top:362.8px;font-size:24px;line-height:24px;color:#222;transform:scaleX(0.9980);transform-origin:0 0;">B7</div>
<svg class="a" style="left:193.0px;top:366.0px;" width="16" height="10" viewBox="0 0 16 10"><path d="M1 1H15L8 9Z" fill="#555"/></svg>
<div class="a" style="left:248.8px;top:362.0px;width:2.4px;height:4.0px;background:#999;"></div>
<div class="a" style="left:248.8px;top:372.0px;width:2.4px;height:4.0px;background:#999;"></div>
<div class="a" style="left:248.8px;top:382.0px;width:2.4px;height:4.0px;background:#999;"></div>
<div class="a" style="left:279.5px;top:348.5px;width:209.0px;height:48.7px;background:#fdfdfd;box-sizing:border-box;border:1.5px solid #c6c6c6;"></div>
<svg class="a" style="left:303.0px;top:361.0px;" width="24" height="24" viewBox="0 0 24 24"><path d="M3 3L21 21M21 3L3 21" stroke="#999" stroke-width="2.2"/></svg>
<svg class="a" style="left:370.0px;top:361.0px;" width="28" height="24" viewBox="0 0 28 24"><path d="M3 12L10 20L25 4" fill="none" stroke="#999" stroke-width="2.4"/></svg>
<div class="t" style="left:453.5px;top:363.6px;font-size:24px;line-height:24px;color:#444;transform:scaleX(1.3389) translateX(-50%);transform-origin:0 0;font-style:italic;font-family:'Liberation Serif',serif;">fx</div>
<div class="a" style="left:495.5px;top:348.5px;width:3182.5px;height:48.7px;background:#fdfdfd;box-sizing:border-box;border:1.5px solid #c6c6c6;"></div>
<svg class="a" style="left:3653.6px;top:365.7px;" width="16" height="12" viewBox="0 0 16 12"><path d="M2 3.6 L8 8.4 L14 3.6" fill="none" stroke="#555" stroke-width="2"/></svg>
<div class="a" style="left:20.0px;top:418.0px;width:3670.0px;height:1498.0px;background:#e6e6e6;"></div>
<div class="a" style="left:65.5px;top:448.0px;width:3581.5px;height:1468.0px;background:#ffffff;"></div>
<div class="a" style="left:0.0px;top:0.0px;width:3647.0px;height:1916.0px;overflow:hidden;">
<div class="a" style="left:65.5px;top:495.0px;width:3581.5px;height:2.0px;background:#d9d9d9;"></div>
<div class="a" style="left:65.5px;top:531.4px;width:3581.5px;height:2.0px;background:#d9d9d9;"></div>
<div class="a" style="left:65.5px;top:567.8px;width:3581.5px;height:2.0px;background:#d9d9d9;"></div>
<div class="a" style="left:65.5px;top:604.2px;width:3581.5px;height:2.0px;background:#d9d9d9;"></div>
<div class="a" style="left:65.5px;top:640.6px;width:3581.5px;height:2.0px;background:#d9d9d9;"></div>
<div class="a" style="left:65.5px;top:677.0px;width:3581.5px;height:2.0px;background:#d9d9d9;"></div>
<div class="a" style="left:65.5px;top:721.0px;width:3581.5px;height:2.0px;background:#d9d9d9;"></div>
<div class="a" style="left:65.5px;top:765.0px;width:3581.5px;height:2.0px;background:#d9d9d9;"></div>
<div class="a" style="left:65.5px;top:809.0px;width:3581.5px;height:2.0px;background:#d9d9d9;"></div>
<div class="a" style="left:65.5px;top:853.0px;width:3581.5px;height:2.0px;background:#d9d9d9;"></div>
<div class="a" style="left:65.5px;top:897.0px;width:3581.5px;height:2.0px;background:#d9d9d9;"></div>
<div class="a" style="left:65.5px;top:941.0px;width:3581.5px;height:2.0px;background:#d9d9d9;"></div>
<div class="a" style="left:65.5px;top:985.0px;width:3581.5px;height:2.0px;background:#d9d9d9;"></div>
<div class="a" style="left:65.5px;top:1021.4px;width:3581.5px;height:2.0px;background:#d9d9d9;"></div>
<div class="a" style="left:65.5px;top:1057.7px;width:3581.5px;height:2.0px;background:#d9d9d9;"></div>
<div class="a" style="left:65.5px;top:1202.7px;width:3581.5px;height:2.0px;background:#d9d9d9;"></div>
<div class="a" style="left:65.5px;top:1239.1px;width:3581.5px;height:2.0px;background:#d9d9d9;"></div>
<div class="a" style="left:65.5px;top:1275.4px;width:3581.5px;height:2.0px;background:#d9d9d9;"></div>
<div class="a" style="left:65.5px;top:1311.8px;width:3581.5px;height:2.0px;background:#d9d9d9;"></div>
<div class="a" style="left:65.5px;top:1348.2px;width:3581.5px;height:2.0px;background:#d9d9d9;"></div>
<div class="a" style="left:65.5px;top:1384.5px;width:3581.5px;height:2.0px;background:#d9d9d9;"></div>
<div class="a" style="left:65.5px;top:1420.9px;width:3581.5px;height:2.0px;background:#d9d9d9;"></div>
<div class="a" style="left:65.5px;top:1457.3px;width:3581.5px;height:2.0px;background:#d9d9d9;"></div>
<div class="a" style="left:65.5px;top:1493.7px;width:3581.5px;height:2.0px;background:#d9d9d9;"></div>
<div class="a" style="left:65.5px;top:1530.0px;width:3581.5px;height:2.0px;background:#d9d9d9;"></div>
<div class="a" style="left:65.5px;top:1566.4px;width:3581.5px;height:2.0px;background:#d9d9d9;"></div>
<div class="a" style="left:65.5px;top:1602.8px;width:3581.5px;height:2.0px;background:#d9d9d9;"></div>
<div class="a" style="left:65.5px;top:1639.1px;width:3581.5px;height:2.0px;background:#d9d9d9;"></div>
<div class="a" style="left:65.5px;top:1675.5px;width:3581.5px;height:2.0px;background:#d9d9d9;"></div>
<div class="a" style="left:65.5px;top:1711.9px;width:3581.5px;height:2.0px;background:#d9d9d9;"></div>
<div class="a" style="left:65.5px;top:1748.2px;width:3581.5px;height:2.0px;background:#d9d9d9;"></div>
<div class="a" style="left:65.5px;top:1784.6px;width:3581.5px;height:2.0px;background:#d9d9d9;"></div>
<div class="a" style="left:65.5px;top:1821.0px;width:3581.5px;height:2.0px;background:#d9d9d9;"></div>
<div class="a" style="left:65.5px;top:1857.4px;width:3581.5px;height:2.0px;background:#d9d9d9;"></div>
<div class="a" style="left:65.5px;top:1893.7px;width:3581.5px;height:2.0px;background:#d9d9d9;"></div>
<div class="a" style="left:65.5px;top:1930.1px;width:3581.5px;height:2.0px;background:#d9d9d9;"></div>
<div class="a" style="left:183.0px;top:448.0px;width:2.0px;height:1468.0px;background:#d9d9d9;"></div>
<div class="a" style="left:581.5px;top:448.0px;width:2.0px;height:1468.0px;background:#d9d9d9;"></div>
<div class="a" style="left:1443.0px;top:448.0px;width:2.0px;height:1468.0px;background:#d9d9d9;"></div>
<div class="a" style="left:2529.5px;top:448.0px;width:2.0px;height:1468.0px;background:#d9d9d9;"></div>
<div class="a" style="left:2640.0px;top:448.0px;width:2.0px;height:1468.0px;background:#d9d9d9;"></div>
<div class="a" style="left:2835.0px;top:448.0px;width:2.0px;height:1468.0px;background:#d9d9d9;"></div>
<div class="a" style="left:3091.0px;top:448.0px;width:2.0px;height:1468.0px;background:#d9d9d9;"></div>
<div class="a" style="left:3326.5px;top:448.0px;width:2.0px;height:1468.0px;background:#d9d9d9;"></div>
<div class="a" style="left:3594.5px;top:448.0px;width:2.0px;height:1468.0px;background:#d9d9d9;"></div>
<div class="a" style="left:3646.0px;top:448.0px;width:2.0px;height:1468.0px;background:#d9d9d9;"></div>
<div class="a" style="left:582.5px;top:496.0px;width:861.5px;height:109.2px;background:#d6dce4;"></div>
<div class="a" style="left:582.5px;top:1203.7px;width:861.5px;height:727.4px;background:#dff0d9;"></div>
<div class="a" style="left:1444.0px;top:1203.7px;width:1883.5px;height:727.4px;background:#d6dce4;"></div>
<div class="a" style="left:3327.5px;top:1203.7px;width:319.5px;height:727.4px;background:#fce4d6;"></div>
<div class="a" style="left:3091.0px;top:723.0px;width:2.0px;height:42.0px;background:#ffffff;"></div>
<div class="a" style="left:2640.0px;top:811.0px;width:2.0px;height:42.0px;background:#ffffff;"></div>
<div class="a" style="left:2640.0px;top:855.0px;width:2.0px;height:42.0px;background:#ffffff;"></div>
<div class="a" style="left:2640.0px;top:899.0px;width:2.0px;height:42.0px;background:#ffffff;"></div>
<div class="a" style="left:3326.5px;top:855.0px;width:2.0px;height:42.0px;background:#ffffff;"></div>
<div class="a" style="left:3326.5px;top:899.0px;width:2.0px;height:42.0px;background:#ffffff;"></div>
<div class="a" style="left:1443.0px;top:987.0px;width:2.0px;height:34.4px;background:#ffffff;"></div>
<div class="a" style="left:65.5px;top:448.0px;width:3581.5px;height:48.0px;background:#000;"></div>
<div class="a" style="left:65.5px;top:495.5px;width:3581.5px;height:2.0px;background:#3a3a3a;"></div>
<div class="t" style="left:192.6px;top:458.1px;font-size:32px;line-height:32px;color:#fff;transform:scaleX(0.9240);transform-origin:0 0;">HARVEST / QUENCH / EXTRACTION START</div>
<div class="t" style="left:576.3px;top:503.0px;font-size:24px;line-height:24px;color:#000;font-weight:bold;transform:scaleX(0.9085) translateX(-100%);transform-origin:0 0;">DATE:</div>
<div class="t" style="left:587.5px;top:505.5px;font-size:21px;line-height:21px;color:#000;transform:scaleX(1.1798);transform-origin:0 0;">5/10/2017 and 5/22/17</div>
<div class="t" style="left:576.3px;top:539.4px;font-size:24px;line-height:24px;color:#000;font-weight:bold;transform:scaleX(0.9445) translateX(-100%);transform-origin:0 0;">Person:</div>
<div class="t" style="left:587.5px;top:541.9px;font-size:21px;line-height:21px;color:#000;transform:scaleX(1.0586);transform-origin:0 0;">Reena &amp; Tim</div>
<div class="t" style="left:189.8px;top:612.6px;font-size:24px;line-height:24px;color:#000;transform:scaleX(0.9950);transform-origin:0 0;">Metabolic quenching and lysis</div>
<div class="t" style="left:70.5px;top:692.9px;font-size:24px;line-height:24px;color:#000;transform:scaleX(1.0133);transform-origin:0 0;">#tags</div>
<div class="t" style="left:191.6px;top:687.4px;font-size:30.5px;line-height:30.5px;color:#000;transform:scaleX(1.0045);transform-origin:0 0;">#protocol.id</div>
<div class="t" style="left:588.4px;top:687.4px;font-size:30.5px;line-height:30.5px;color:#000;transform:scaleX(1.0157);transform-origin:0 0;">#protocol.type</div>
<div class="a" style="left:2531.5px;top:678.0px;width:108.5px;height:44.0px;overflow:hidden;">
<div class="t" style="left:5.3px;top:9.4px;font-size:30.5px;line-height:30.5px;color:#000;">#protocol.type</div>
</div>
<div class="a" style="left:2642.0px;top:678.0px;width:193.0px;height:44.0px;overflow:hidden;">
<div class="t" style="left:5.5px;top:9.4px;font-size:30.5px;line-height:30.5px;color:#000;">#.sample_type</div>
</div>
<div class="t" style="left:2840.0px;top:692.9px;font-size:24px;line-height:24px;color:#000;transform:scaleX(1.0367);transform-origin:0 0;">#.filename</div>
<div class="t" style="left:191.6px;top:731.4px;font-size:30.5px;line-height:30.5px;color:#000;transform:scaleX(0.9780);transform-origin:0 0;">mouse_tissue_collection</div>
<div class="t" style="left:588.4px;top:731.4px;font-size:30.5px;line-height:30.5px;color:#000;transform:scaleX(0.9988);transform-origin:0 0;">collection</div>
<div class="a" style="left:2531.5px;top:722.0px;width:108.5px;height:44.0px;overflow:hidden;">
<div class="t" style="left:5.3px;top:9.4px;font-size:30.5px;line-height:30.5px;color:#000;">Mouse identifier</div>
</div>
<div class="t" style="left:2647.5px;top:731.4px;font-size:30.5px;line-height:30.5px;color:#000;transform:scaleX(0.9776);transform-origin:0 0;">mouse</div>
<div class="t" style="left:2840.0px;top:736.9px;font-size:24px;line-height:24px;color:#000;transform:scaleX(1.0102);transform-origin:0 0;">mouse_tissue_procedure.pdf</div>
<div class="t" style="left:74.0px;top:818.6px;font-size:30.5px;line-height:30.5px;color:#000;transform:scaleX(0.9206);transform-origin:0 0;">#tags</div>
<div class="t" style="left:191.6px;top:818.6px;font-size:30.5px;line-height:30.5px;color:#000;transform:scaleX(1.0045);transform-origin:0 0;">#protocol.id</div>
<div class="t" style="left:588.4px;top:818.6px;font-size:30.5px;line-height:30.5px;color:#000;transform:scaleX(1.0157);transform-origin:0 0;">#protocol.type</div>
<div class="t" style="left:2536.8px;top:818.6px;font-size:30.5px;line-height:30.5px;color:#000;transform:scaleX(1.0076);transform-origin:0 0;">#protocol.description</div>
<div class="t" style="left:2840.0px;top:825.1px;font-size:24px;line-height:24px;color:#000;transform:scaleX(1.0625);transform-origin:0 0;">#.order</div>
<div class="t" style="left:3097.5px;top:825.1px;font-size:24px;line-height:24px;color:#000;transform:scaleX(1.0304);transform-origin:0 0;">#.filename</div>
<div class="t" style="left:191.6px;top:863.1px;font-size:30.5px;line-height:30.5px;color:#000;transform:scaleX(0.9629);transform-origin:0 0;">tissue_quench</div>
<div class="t" style="left:588.4px;top:863.1px;font-size:30.5px;line-height:30.5px;color:#000;transform:scaleX(0.9749);transform-origin:0 0;">sample_prep</div>
<div class="a" style="left:2531.5px;top:854.0px;width:303.5px;height:44.0px;overflow:hidden;">
<div class="t" style="left:5.3px;top:9.1px;font-size:30.5px;line-height:30.5px;color:#000;">Tissue is frozen in liquid nitrogen</div>
</div>
<div class="t" style="left:3086.7px;top:869.1px;font-size:24px;line-height:24px;color:#000;transform:translateX(-100%);">1</div>
<div class="t" style="left:3097.5px;top:869.1px;font-size:24px;line-height:24px;color:#000;transform:scaleX(0.9921);transform-origin:0 0;">No tissue_quench file.</div>
<div class="t" style="left:191.6px;top:907.1px;font-size:30.5px;line-height:30.5px;color:#000;transform:scaleX(0.9774);transform-origin:0 0;">frozen_tissue_grind</div>
<div class="t" style="left:588.4px;top:907.1px;font-size:30.5px;line-height:30.5px;color:#000;transform:scaleX(0.9749);transform-origin:0 0;">sample_prep</div>
<div class="a" style="left:2531.5px;top:898.0px;width:303.5px;height:44.0px;overflow:hidden;">
<div class="t" style="left:5.3px;top:9.1px;font-size:30.5px;line-height:30.5px;color:#000;">Frozen tissue is ground</div>
</div>
<div class="t" style="left:3086.7px;top:913.1px;font-size:24px;line-height:24px;color:#000;transform:translateX(-100%);">2</div>
<div class="t" style="left:3097.5px;top:913.1px;font-size:24px;line-height:24px;color:#000;transform:scaleX(1.0082);transform-origin:0 0;">No frozen_tissue_grind file.</div>
<div class="t" style="left:70.5px;top:993.5px;font-size:24px;line-height:24px;color:#000;transform:scaleX(1.0133);transform-origin:0 0;">#tags</div>
<div class="t" style="left:586.4px;top:994.2px;font-size:22px;line-height:22px;color:#000;transform:scaleX(1.0769);transform-origin:0 0;">#entity.id;#.type=sample;*#.protocol.id=mouse_tissue_collection,tissue_quench,frozen_tissue_grind</div>
<div class="t" style="left:70.8px;top:1029.8px;font-size:24px;line-height:24px;color:#000;transform:scaleX(1.0080);transform-origin:0 0;">#ignore</div>
<div class="t" style="left:70.8px;top:1175.3px;font-size:24px;line-height:24px;color:#000;transform:scaleX(1.0080);transform-origin:0 0;">#ignore</div>
<div class="t" style="left:189.7px;top:1175.3px;font-size:24px;line-height:24px;color:#000;transform:scaleX(0.9175);transform-origin:0 0;">Slice #</div>
<div class="t" style="left:587.0px;top:1175.3px;font-size:24px;line-height:24px;color:#000;transform:scaleX(0.9904);transform-origin:0 0;">Parent Subject ID</div>
<div class="t" style="left:1449.5px;top:1175.3px;font-size:24px;line-height:24px;color:#000;transform:scaleX(1.0327);transform-origin:0 0;">cells pellet wet wt. (g)</div>
<div class="t" style="left:2535.5px;top:1065.1px;font-size:24px;line-height:24px;color:#000;">ml Cold</div>
<div class="t" style="left:2535.5px;top:1101.9px;font-size:24px;line-height:24px;color:#000;">CH3CN</div>
<div class="t" style="left:2535.5px;top:1138.7px;font-size:24px;line-height:24px;color:#000;">(1st</div>
<div class="t" style="left:2535.5px;top:1175.5px;font-size:24px;line-height:24px;color:#000;">quench)</div>
<div class="t" style="left:2646.0px;top:1101.9px;font-size:24px;line-height:24px;color:#000;">ml H2O w/ 0.2ml</div>
<div class="t" style="left:2646.0px;top:1138.7px;font-size:24px;line-height:24px;color:#000;">0.2mM Tris pH8</div>
<div class="t" style="left:2646.0px;top:1175.5px;font-size:24px;line-height:24px;color:#000;">(1st quench)</div>
<div class="t" style="left:2841.0px;top:1138.7px;font-size:24px;line-height:24px;color:#000;">ml Cold CH3CN (2nd</div>
<div class="t" style="left:2841.0px;top:1175.5px;font-size:24px;line-height:24px;color:#000;">quench)</div>
<div class="t" style="left:3097.5px;top:1175.3px;font-size:24px;line-height:24px;color:#000;transform:scaleX(0.9784);transform-origin:0 0;">ml H2O (2nd quench)</div>
<div class="t" style="left:3333.0px;top:1175.3px;font-size:24px;line-height:24px;color:#000;transform:scaleX(0.9649);transform-origin:0 0;">Total ml CH3CN</div>
<div class="t" style="left:3600.4px;top:1175.3px;font-size:24px;line-height:24px;color:#000;">total ml H2O</div>
<div class="t" style="left:189.5px;top:1211.4px;font-size:24px;line-height:24px;color:#000;">01</div>
<svg class="a" style="left:184.5px;top:1204.7px;" width="11" height="11" viewBox="0 0 11 11"><path d="M0 0H11L0 11Z" fill="#0f8a3c"/></svg>
<div class="t" style="left:586.5px;top:1211.4px;font-size:24px;line-height:24px;color:#000;font-weight:bold;transform:scaleX(0.9780);transform-origin:0 0;">01_A0_Spleen_naive_0days_170427_UKy_GCH_rep1</div>
<div class="t" style="left:2635.7px;top:1211.4px;font-size:24px;line-height:24px;color:#000;transform:translateX(-100%);">1</div>
<div class="t" style="left:2831.0px;top:1211.4px;font-size:24px;line-height:24px;color:#000;transform:translateX(-100%);">0.75</div>
<div class="t" style="left:3087.0px;top:1211.4px;font-size:24px;line-height:24px;color:#000;transform:translateX(-100%);">1</div>
<div class="t" style="left:3322.0px;top:1211.4px;font-size:24px;line-height:24px;color:#000;transform:translateX(-100%);">0.75</div>
<div class="t" style="left:3590.0px;top:1211.4px;font-size:24px;line-height:24px;color:#000;transform:translateX(-100%);">2</div>
<div class="t" style="left:189.5px;top:1247.7px;font-size:24px;line-height:24px;color:#000;">02</div>
<svg class="a" style="left:184.5px;top:1241.1px;" width="11" height="11" viewBox="0 0 11 11"><path d="M0 0H11L0 11Z" fill="#0f8a3c"/></svg>
<div class="t" style="left:586.5px;top:1247.7px;font-size:24px;line-height:24px;color:#000;font-weight:bold;transform:scaleX(0.9780);transform-origin:0 0;">02_A1_Spleen_naive_0days_170427_UKy_GCH_rep2</div>
<div class="t" style="left:2635.7px;top:1247.7px;font-size:24px;line-height:24px;color:#000;transform:translateX(-100%);">1</div>
<div class="t" style="left:2831.0px;top:1247.7px;font-size:24px;line-height:24px;color:#000;transform:translateX(-100%);">0.75</div>
<div class="t" style="left:3087.0px;top:1247.7px;font-size:24px;line-height:24px;color:#000;transform:translateX(-100%);">1</div>
<div class="t" style="left:3322.0px;top:1247.7px;font-size:24px;line-height:24px;color:#000;transform:translateX(-100%);">0.75</div>
<div class="t" style="left:3590.0px;top:1247.7px;font-size:24px;line-height:24px;color:#000;transform:translateX(-100%);">2</div>
<div class="t" style="left:189.5px;top:1284.1px;font-size:24px;line-height:24px;color:#000;">03</div>
<svg class="a" style="left:184.5px;top:1277.4px;" width="11" height="11" viewBox="0 0 11 11"><path d="M0 0H11L0 11Z" fill="#0f8a3c"/></svg>
<div class="t" style="left:586.5px;top:1284.1px;font-size:24px;line-height:24px;color:#000;font-weight:bold;transform:scaleX(0.9780);transform-origin:0 0;">03_A2_Spleen_naive_0days_170427_UKy_GCH_rep3</div>
<div class="t" style="left:2635.7px;top:1284.1px;font-size:24px;line-height:24px;color:#000;transform:translateX(-100%);">1</div>
<div class="t" style="left:2831.0px;top:1284.1px;font-size:24px;line-height:24px;color:#000;transform:translateX(-100%);">0.75</div>
<div class="t" style="left:3087.0px;top:1284.1px;font-size:24px;line-height:24px;color:#000;transform:translateX(-100%);">1</div>
<div class="t" style="left:3322.0px;top:1284.1px;font-size:24px;line-height:24px;color:#000;transform:translateX(-100%);">0.75</div>
<div class="t" style="left:3590.0px;top:1284.1px;font-size:24px;line-height:24px;color:#000;transform:translateX(-100%);">2</div>
<div class="t" style="left:189.5px;top:1320.5px;font-size:24px;line-height:24px;color:#000;">04</div>
<svg class="a" style="left:184.5px;top:1313.8px;" width="11" height="11" viewBox="0 0 11 11"><path d="M0 0H11L0 11Z" fill="#0f8a3c"/></svg>
<div class="t" style="left:586.5px;top:1320.5px;font-size:24px;line-height:24px;color:#000;font-weight:bold;transform:scaleX(0.9780);transform-origin:0 0;">04_B0_Spleen_syngenic_42days_170427_UKy_GCH_rep1</div>
<div class="t" style="left:2635.7px;top:1320.5px;font-size:24px;line-height:24px;color:#000;transform:translateX(-100%);">1</div>
<div class="t" style="left:2831.0px;top:1320.5px;font-size:24px;line-height:24px;color:#000;transform:translateX(-100%);">0.75</div>
<div class="t" style="left:3087.0px;top:1320.5px;font-size:24px;line-height:24px;color:#000;transform:translateX(-100%);">1</div>
<div class="t" style="left:3322.0px;top:1320.5px;font-size:24px;line-height:24px;color:#000;transform:translateX(-100%);">0.75</div>
<div class="t" style="left:3590.0px;top:1320.5px;font-size:24px;line-height:24px;color:#000;transform:translateX(-100%);">2</div>
<div class="t" style="left:189.5px;top:1356.8px;font-size:24px;line-height:24px;color:#000;">05</div>
<svg class="a" style="left:184.5px;top:1350.2px;" width="11" height="11" viewBox="0 0 11 11"><path d="M0 0H11L0 11Z" fill="#0f8a3c"/></svg>
<div class="t" style="left:586.5px;top:1356.8px;font-size:24px;line-height:24px;color:#000;font-weight:bold;transform:scaleX(0.9780);transform-origin:0 0;">05_B1_Spleen_syngenic_42days_170427_UKy_GCH_rep2</div>
<div class="t" style="left:2635.7px;top:1356.8px;font-size:24px;line-height:24px;color:#000;transform:translateX(-100%);">1</div>
<div class="t" style="left:2831.0px;top:1356.8px;font-size:24px;line-height:24px;color:#000;transform:translateX(-100%);">0.75</div>
<div class="t" style="left:3087.0px;top:1356.8px;font-size:24px;line-height:24px;color:#000;transform:translateX(-100%);">1</div>
<div class="t" style="left:3322.0px;top:1356.8px;font-size:24px;line-height:24px;color:#000;transform:translateX(-100%);">0.75</div>
<div class="t" style="left:3590.0px;top:1356.8px;font-size:24px;line-height:24px;color:#000;transform:translateX(-100%);">2</div>
<div class="t" style="left:189.5px;top:1393.2px;font-size:24px;line-height:24px;color:#000;">06</div>
<svg class="a" style="left:184.5px;top:1386.5px;" width="11" height="11" viewBox="0 0 11 11"><path d="M0 0H11L0 11Z" fill="#0f8a3c"/></svg>
<div class="t" style="left:586.5px;top:1393.2px;font-size:24px;line-height:24px;color:#000;font-weight:bold;transform:scaleX(0.9780);transform-origin:0 0;">06_B2_Spleen_syngenic_42days_170427_UKy_GCH_rep3</div>
<div class="t" style="left:2635.7px;top:1393.2px;font-size:24px;line-height:24px;color:#000;transform:translateX(-100%);">1</div>
<div class="t" style="left:2831.0px;top:1393.2px;font-size:24px;line-height:24px;color:#000;transform:translateX(-100%);">0.75</div>
<div class="t" style="left:3087.0px;top:1393.2px;font-size:24px;line-height:24px;color:#000;transform:translateX(-100%);">1</div>
<div class="t" style="left:3322.0px;top:1393.2px;font-size:24px;line-height:24px;color:#000;transform:translateX(-100%);">0.75</div>
<div class="t" style="left:3590.0px;top:1393.2px;font-size:24px;line-height:24px;color:#000;transform:translateX(-100%);">2</div>
<div class="t" style="left:189.5px;top:1429.6px;font-size:24px;line-height:24px;color:#000;">07</div>
<svg class="a" style="left:184.5px;top:1422.9px;" width="11" height="11" viewBox="0 0 11 11"><path d="M0 0H11L0 11Z" fill="#0f8a3c"/></svg>
<div class="t" style="left:586.5px;top:1429.6px;font-size:24px;line-height:24px;color:#000;font-weight:bold;transform:scaleX(0.9780);transform-origin:0 0;">07_C1-1_Spleen_allogenic_42days_170427_UKy_GCH_rep1</div>
<div class="t" style="left:2635.7px;top:1429.6px;font-size:24px;line-height:24px;color:#000;transform:translateX(-100%);">1</div>
<div class="t" style="left:2831.0px;top:1429.6px;font-size:24px;line-height:24px;color:#000;transform:translateX(-100%);">0.75</div>
<div class="t" style="left:3087.0px;top:1429.6px;font-size:24px;line-height:24px;color:#000;transform:translateX(-100%);">1</div>
<div class="t" style="left:3322.0px;top:1429.6px;font-size:24px;line-height:24px;color:#000;transform:translateX(-100%);">0.75</div>
<div class="t" style="left:3590.0px;top:1429.6px;font-size:24px;line-height:24px;color:#000;transform:translateX(-100%);">2</div>
<div class="t" style="left:189.5px;top:1466.0px;font-size:24px;line-height:24px;color:#000;">08</div>
<svg class="a" style="left:184.5px;top:1459.3px;" width="11" height="11" viewBox="0 0 11 11"><path d="M0 0H11L0 11Z" fill="#0f8a3c"/></svg>
<div class="t" style="left:586.5px;top:1466.0px;font-size:24px;line-height:24px;color:#000;font-weight:bold;transform:scaleX(0.9780);transform-origin:0 0;">08_C1-2_Spleen_allogenic_42days_170427_UKy_GCH_rep2</div>
<div class="t" style="left:2635.7px;top:1466.0px;font-size:24px;line-height:24px;color:#000;transform:translateX(-100%);">1</div>
<div class="t" style="left:2831.0px;top:1466.0px;font-size:24px;line-height:24px;color:#000;transform:translateX(-100%);">0.75</div>
<div class="t" style="left:3087.0px;top:1466.0px;font-size:24px;line-height:24px;color:#000;transform:translateX(-100%);">1</div>
<div class="t" style="left:3322.0px;top:1466.0px;font-size:24px;line-height:24px;color:#000;transform:translateX(-100%);">0.75</div>
<div class="t" style="left:3590.0px;top:1466.0px;font-size:24px;line-height:24px;color:#000;transform:translateX(-100%);">2</div>
<div class="t" style="left:189.5px;top:1502.3px;font-size:24px;line-height:24px;color:#000;">09</div>
<svg class="a" style="left:184.5px;top:1495.7px;" width="11" height="11" viewBox="0 0 11 11"><path d="M0 0H11L0 11Z" fill="#0f8a3c"/></svg>
<div class="t" style="left:586.5px;top:1502.3px;font-size:24px;line-height:24px;color:#000;font-weight:bold;transform:scaleX(0.9780);transform-origin:0 0;">09_C2-0_Spleen_allogenic_42days_170427_UKy_GCH_rep1</div>
<div class="t" style="left:2635.7px;top:1502.3px;font-size:24px;line-height:24px;color:#000;transform:translateX(-100%);">1</div>
<div class="t" style="left:2831.0px;top:1502.3px;font-size:24px;line-height:24px;color:#000;transform:translateX(-100%);">0.75</div>
<div class="t" style="left:3087.0px;top:1502.3px;font-size:24px;line-height:24px;color:#000;transform:translateX(-100%);">1</div>
<div class="t" style="left:3322.0px;top:1502.3px;font-size:24px;line-height:24px;color:#000;transform:translateX(-100%);">0.75</div>
<div class="t" style="left:3590.0px;top:1502.3px;font-size:24px;line-height:24px;color:#000;transform:translateX(-100%);">2</div>
<div class="t" style="left:189.5px;top:1538.7px;font-size:24px;line-height:24px;color:#000;">10</div>
<svg class="a" style="left:184.5px;top:1532.0px;" width="11" height="11" viewBox="0 0 11 11"><path d="M0 0H11L0 11Z" fill="#0f8a3c"/></svg>
<div class="t" style="left:586.5px;top:1538.7px;font-size:24px;line-height:24px;color:#000;font-weight:bold;transform:scaleX(0.9780);transform-origin:0 0;">10_B1-0_Spleen_syngenic_7days_170427_UKy_GCH_rep1</div>
<div class="t" style="left:2635.7px;top:1538.7px;font-size:24px;line-height:24px;color:#000;transform:translateX(-100%);">1</div>
<div class="t" style="left:2831.0px;top:1538.7px;font-size:24px;line-height:24px;color:#000;transform:translateX(-100%);">0.75</div>
<div class="t" style="left:3087.0px;top:1538.7px;font-size:24px;line-height:24px;color:#000;transform:translateX(-100%);">1</div>
<div class="t" style="left:3322.0px;top:1538.7px;font-size:24px;line-height:24px;color:#000;transform:translateX(-100%);">0.75</div>
<div class="t" style="left:3590.0px;top:1538.7px;font-size:24px;line-height:24px;color:#000;transform:translateX(-100%);">2</div>
<div class="t" style="left:189.5px;top:1575.1px;font-size:24px;line-height:24px;color:#000;">11</div>
<svg class="a" style="left:184.5px;top:1568.4px;" width="11" height="11" viewBox="0 0 11 11"><path d="M0 0H11L0 11Z" fill="#0f8a3c"/></svg>
<div class="t" style="left:586.5px;top:1575.1px;font-size:24px;line-height:24px;color:#000;font-weight:bold;transform:scaleX(0.9780);transform-origin:0 0;">11_B1-1_Spleen_syngenic_7days_170427_UKy_GCH_rep2</div>
<div class="t" style="left:2635.7px;top:1575.1px;font-size:24px;line-height:24px;color:#000;transform:translateX(-100%);">1</div>
<div class="t" style="left:2831.0px;top:1575.1px;font-size:24px;line-height:24px;color:#000;transform:translateX(-100%);">0.75</div>
<div class="t" style="left:3087.0px;top:1575.1px;font-size:24px;line-height:24px;color:#000;transform:translateX(-100%);">1</div>
<div class="t" style="left:3322.0px;top:1575.1px;font-size:24px;line-height:24px;color:#000;transform:translateX(-100%);">0.75</div>
<div class="t" style="left:3590.0px;top:1575.1px;font-size:24px;line-height:24px;color:#000;transform:translateX(-100%);">2</div>
<div class="t" style="left:189.5px;top:1611.4px;font-size:24px;line-height:24px;color:#000;">12</div>
<svg class="a" style="left:184.5px;top:1604.8px;" width="11" height="11" viewBox="0 0 11 11"><path d="M0 0H11L0 11Z" fill="#0f8a3c"/></svg>
<div class="t" style="left:586.5px;top:1611.4px;font-size:24px;line-height:24px;color:#000;font-weight:bold;transform:scaleX(0.9780);transform-origin:0 0;">12_B1-2_Spleen_syngenic_7days_170427_UKy_GCH_rep3</div>
<div class="t" style="left:2635.7px;top:1611.4px;font-size:24px;line-height:24px;color:#000;transform:translateX(-100%);">1</div>
<div class="t" style="left:2831.0px;top:1611.4px;font-size:24px;line-height:24px;color:#000;transform:translateX(-100%);">0.75</div>
<div class="t" style="left:3087.0px;top:1611.4px;font-size:24px;line-height:24px;color:#000;transform:translateX(-100%);">1</div>
<div class="t" style="left:3322.0px;top:1611.4px;font-size:24px;line-height:24px;color:#000;transform:translateX(-100%);">0.75</div>
<div class="t" style="left:3590.0px;top:1611.4px;font-size:24px;line-height:24px;color:#000;transform:translateX(-100%);">2</div>
<div class="t" style="left:189.5px;top:1647.8px;font-size:24px;line-height:24px;color:#000;">13</div>
<svg class="a" style="left:184.5px;top:1641.1px;" width="11" height="11" viewBox="0 0 11 11"><path d="M0 0H11L0 11Z" fill="#0f8a3c"/></svg>
<div class="t" style="left:586.5px;top:1647.8px;font-size:24px;line-height:24px;color:#000;font-weight:bold;transform:scaleX(0.9780);transform-origin:0 0;">13_C1-1_Spleen_allogenic_7days_170427_UKy_GCH_rep1</div>
<div class="t" style="left:2635.7px;top:1647.8px;font-size:24px;line-height:24px;color:#000;transform:translateX(-100%);">1</div>
<div class="t" style="left:2831.0px;top:1647.8px;font-size:24px;line-height:24px;color:#000;transform:translateX(-100%);">0.75</div>
<div class="t" style="left:3087.0px;top:1647.8px;font-size:24px;line-height:24px;color:#000;transform:translateX(-100%);">1</div>
<div class="t" style="left:3322.0px;top:1647.8px;font-size:24px;line-height:24px;color:#000;transform:translateX(-100%);">0.75</div>
<div class="t" style="left:3590.0px;top:1647.8px;font-size:24px;line-height:24px;color:#000;transform:translateX(-100%);">2</div>
<div class="t" style="left:189.5px;top:1684.2px;font-size:24px;line-height:24px;color:#000;">14</div>
<svg class="a" style="left:184.5px;top:1677.5px;" width="11" height="11" viewBox="0 0 11 11"><path d="M0 0H11L0 11Z" fill="#0f8a3c"/></svg>
<div class="t" style="left:586.5px;top:1684.2px;font-size:24px;line-height:24px;color:#000;font-weight:bold;transform:scaleX(0.9780);transform-origin:0 0;">14_C1-2_Spleen_allogenic_7days_170427_UKy_GCH_rep2</div>
<div class="t" style="left:2635.7px;top:1684.2px;font-size:24px;line-height:24px;color:#000;transform:translateX(-100%);">1</div>
<div class="t" style="left:2831.0px;top:1684.2px;font-size:24px;line-height:24px;color:#000;transform:translateX(-100%);">0.75</div>
<div class="t" style="left:3087.0px;top:1684.2px;font-size:24px;line-height:24px;color:#000;transform:translateX(-100%);">1</div>
<div class="t" style="left:3322.0px;top:1684.2px;font-size:24px;line-height:24px;color:#000;transform:translateX(-100%);">0.75</div>
<div class="t" style="left:3590.0px;top:1684.2px;font-size:24px;line-height:24px;color:#000;transform:translateX(-100%);">2</div>
<div class="t" style="left:189.5px;top:1720.5px;font-size:24px;line-height:24px;color:#000;">15</div>
<svg class="a" style="left:184.5px;top:1713.9px;" width="11" height="11" viewBox="0 0 11 11"><path d="M0 0H11L0 11Z" fill="#0f8a3c"/></svg>
<div class="t" style="left:586.5px;top:1720.5px;font-size:24px;line-height:24px;color:#000;font-weight:bold;transform:scaleX(0.9780);transform-origin:0 0;">15_C1-20_Spleen_allogenic_7days_170427_UKy_GCH_rep3</div>
<div class="t" style="left:2635.7px;top:1720.5px;font-size:24px;line-height:24px;color:#000;transform:translateX(-100%);">1</div>
<div class="t" style="left:2831.0px;top:1720.5px;font-size:24px;line-height:24px;color:#000;transform:translateX(-100%);">0.75</div>
<div class="t" style="left:3087.0px;top:1720.5px;font-size:24px;line-height:24px;color:#000;transform:translateX(-100%);">1</div>
<div class="t" style="left:3322.0px;top:1720.5px;font-size:24px;line-height:24px;color:#000;transform:translateX(-100%);">0.75</div>
<div class="t" style="left:3590.0px;top:1720.5px;font-size:24px;line-height:24px;color:#000;transform:translateX(-100%);">2</div>
<div class="t" style="left:189.5px;top:1756.9px;font-size:24px;line-height:24px;color:#000;">16</div>
<svg class="a" style="left:184.5px;top:1750.2px;" width="11" height="11" viewBox="0 0 11 11"><path d="M0 0H11L0 11Z" fill="#0f8a3c"/></svg>
<div class="t" style="left:586.5px;top:1756.9px;font-size:24px;line-height:24px;color:#000;font-weight:bold;transform:scaleX(0.9780);transform-origin:0 0;">16_A0_Lung_naive_0days_170427_UKy_GCH_rep1</div>
<div class="t" style="left:2635.7px;top:1756.9px;font-size:24px;line-height:24px;color:#000;transform:translateX(-100%);">1</div>
<div class="t" style="left:2831.0px;top:1756.9px;font-size:24px;line-height:24px;color:#000;transform:translateX(-100%);">0.75</div>
<div class="t" style="left:3087.0px;top:1756.9px;font-size:24px;line-height:24px;color:#000;transform:translateX(-100%);">1</div>
<div class="t" style="left:3322.0px;top:1756.9px;font-size:24px;line-height:24px;color:#000;transform:translateX(-100%);">0.75</div>
<div class="t" style="left:3590.0px;top:1756.9px;font-size:24px;line-height:24px;color:#000;transform:translateX(-100%);">2</div>
<div class="t" style="left:189.5px;top:1793.3px;font-size:24px;line-height:24px;color:#000;">17</div>
<svg class="a" style="left:184.5px;top:1786.6px;" width="11" height="11" viewBox="0 0 11 11"><path d="M0 0H11L0 11Z" fill="#0f8a3c"/></svg>
<div class="t" style="left:586.5px;top:1793.3px;font-size:24px;line-height:24px;color:#000;font-weight:bold;transform:scaleX(0.9780);transform-origin:0 0;">17_A1_Lung_naive_0days_170427_UKy_GCH_rep2</div>
<div class="t" style="left:2635.7px;top:1793.3px;font-size:24px;line-height:24px;color:#000;transform:translateX(-100%);">1</div>
<div class="t" style="left:2831.0px;top:1793.3px;font-size:24px;line-height:24px;color:#000;transform:translateX(-100%);">0.75</div>
<div class="t" style="left:3087.0px;top:1793.3px;font-size:24px;line-height:24px;color:#000;transform:translateX(-100%);">1</div>
<div class="t" style="left:3322.0px;top:1793.3px;font-size:24px;line-height:24px;color:#000;transform:translateX(-100%);">0.75</div>
<div class="t" style="left:3590.0px;top:1793.3px;font-size:24px;line-height:24px;color:#000;transform:translateX(-100%);">2</div>
<div class="t" style="left:189.5px;top:1829.7px;font-size:24px;line-height:24px;color:#000;">18</div>
<svg class="a" style="left:184.5px;top:1823.0px;" width="11" height="11" viewBox="0 0 11 11"><path d="M0 0H11L0 11Z" fill="#0f8a3c"/></svg>
<div class="t" style="left:586.5px;top:1829.7px;font-size:24px;line-height:24px;color:#000;font-weight:bold;transform:scaleX(0.9780);transform-origin:0 0;">18_A2_Lung_naive_0days_170427_UKy_GCH_rep3</div>
<div class="t" style="left:2635.7px;top:1829.7px;font-size:24px;line-height:24px;color:#000;transform:translateX(-100%);">1</div>
<div class="t" style="left:2831.0px;top:1829.7px;font-size:24px;line-height:24px;color:#000;transform:translateX(-100%);">0.75</div>
<div class="t" style="left:3087.0px;top:1829.7px;font-size:24px;line-height:24px;color:#000;transform:translateX(-100%);">1</div>
<div class="t" style="left:3322.0px;top:1829.7px;font-size:24px;line-height:24px;color:#000;transform:translateX(-100%);">0.75</div>
<div class="t" style="left:3590.0px;top:1829.7px;font-size:24px;line-height:24px;color:#000;transform:translateX(-100%);">2</div>
<div class="t" style="left:189.5px;top:1866.0px;font-size:24px;line-height:24px;color:#000;">19</div>
<svg class="a" style="left:184.5px;top:1859.4px;" width="11" height="11" viewBox="0 0 11 11"><path d="M0 0H11L0 11Z" fill="#0f8a3c"/></svg>
<div class="t" style="left:586.5px;top:1866.0px;font-size:24px;line-height:24px;color:#000;font-weight:bold;transform:scaleX(0.9780);transform-origin:0 0;">19_B0_Lung_syngenic_42days_170427_UKy_GCH_rep1</div>
<div class="t" style="left:2635.7px;top:1866.0px;font-size:24px;line-height:24px;color:#000;transform:translateX(-100%);">1</div>
<div class="t" style="left:2831.0px;top:1866.0px;font-size:24px;line-height:24px;color:#000;transform:translateX(-100%);">0.75</div>
<div class="t" style="left:3087.0px;top:1866.0px;font-size:24px;line-height:24px;color:#000;transform:translateX(-100%);">1</div>
<div class="t" style="left:3322.0px;top:1866.0px;font-size:24px;line-height:24px;color:#000;transform:translateX(-100%);">0.75</div>
<div class="t" style="left:3590.0px;top:1866.0px;font-size:24px;line-height:24px;color:#000;transform:translateX(-100%);">2</div>
<div class="t" style="left:189.5px;top:1902.4px;font-size:24px;line-height:24px;color:#000;">20</div>
<svg class="a" style="left:184.5px;top:1895.7px;" width="11" height="11" viewBox="0 0 11 11"><path d="M0 0H11L0 11Z" fill="#0f8a3c"/></svg>
<div class="t" style="left:586.5px;top:1902.4px;font-size:24px;line-height:24px;color:#000;font-weight:bold;transform:scaleX(0.9780);transform-origin:0 0;">20_B1_Lung_syngenic_42days_170427_UKy_GCH_rep2</div>
<div class="t" style="left:2635.7px;top:1902.4px;font-size:24px;line-height:24px;color:#000;transform:translateX(-100%);">1</div>
<div class="t" style="left:2831.0px;top:1902.4px;font-size:24px;line-height:24px;color:#000;transform:translateX(-100%);">0.75</div>
<div class="t" style="left:3087.0px;top:1902.4px;font-size:24px;line-height:24px;color:#000;transform:translateX(-100%);">1</div>
<div class="t" style="left:3322.0px;top:1902.4px;font-size:24px;line-height:24px;color:#000;transform:translateX(-100%);">0.75</div>
<div class="t" style="left:3590.0px;top:1902.4px;font-size:24px;line-height:24px;color:#000;transform:translateX(-100%);">2</div>
</div>
<div class="a" style="left:20.0px;top:448.0px;width:45.5px;height:1468.0px;background:#e6e6e6;"></div>
<div class="a" style="left:20.0px;top:494.8px;width:45.5px;height:2.4px;background:#c9c9c9;"></div>
<div class="a" style="left:20.0px;top:448.0px;width:46.0px;height:1468.0px;overflow:hidden;">
<div class="t" style="left:22.5px;top:18.4px;font-size:25px;line-height:25px;color:#333;transform:scaleX(0.8600) translateX(-50%);transform-origin:0 0;">81</div>
</div>
<div class="a" style="left:20.0px;top:531.2px;width:45.5px;height:2.4px;background:#c9c9c9;"></div>
<div class="a" style="left:20.0px;top:448.0px;width:46.0px;height:1468.0px;overflow:hidden;">
<div class="t" style="left:22.5px;top:54.9px;font-size:25px;line-height:25px;color:#333;transform:scaleX(0.8600) translateX(-50%);transform-origin:0 0;">82</div>
</div>
<div class="a" style="left:20.0px;top:567.6px;width:45.5px;height:2.4px;background:#c9c9c9;"></div>
<div class="a" style="left:20.0px;top:448.0px;width:46.0px;height:1468.0px;overflow:hidden;">
<div class="t" style="left:22.5px;top:91.2px;font-size:25px;line-height:25px;color:#333;transform:scaleX(0.8600) translateX(-50%);transform-origin:0 0;">83</div>
</div>
<div class="a" style="left:20.0px;top:604.0px;width:45.5px;height:2.4px;background:#c9c9c9;"></div>
<div class="a" style="left:20.0px;top:448.0px;width:46.0px;height:1468.0px;overflow:hidden;">
<div class="t" style="left:22.5px;top:127.6px;font-size:25px;line-height:25px;color:#333;transform:scaleX(0.8600) translateX(-50%);transform-origin:0 0;">84</div>
</div>
<div class="a" style="left:20.0px;top:640.4px;width:45.5px;height:2.4px;background:#c9c9c9;"></div>
<div class="a" style="left:20.0px;top:448.0px;width:46.0px;height:1468.0px;overflow:hidden;">
<div class="t" style="left:22.5px;top:164.0px;font-size:25px;line-height:25px;color:#333;transform:scaleX(0.8600) translateX(-50%);transform-origin:0 0;">85</div>
</div>
<div class="a" style="left:20.0px;top:676.8px;width:45.5px;height:2.4px;background:#c9c9c9;"></div>
<div class="a" style="left:20.0px;top:448.0px;width:46.0px;height:1468.0px;overflow:hidden;">
<div class="t" style="left:22.5px;top:200.4px;font-size:25px;line-height:25px;color:#333;transform:scaleX(0.8600) translateX(-50%);transform-origin:0 0;">86</div>
</div>
<div class="a" style="left:20.0px;top:720.8px;width:45.5px;height:2.4px;background:#c9c9c9;"></div>
<div class="a" style="left:20.0px;top:448.0px;width:46.0px;height:1468.0px;overflow:hidden;">
<div class="t" style="left:22.5px;top:244.5px;font-size:25px;line-height:25px;color:#333;transform:scaleX(0.8600) translateX(-50%);transform-origin:0 0;">87</div>
</div>
<div class="a" style="left:20.0px;top:764.8px;width:45.5px;height:2.4px;background:#c9c9c9;"></div>
<div class="a" style="left:20.0px;top:448.0px;width:46.0px;height:1468.0px;overflow:hidden;">
<div class="t" style="left:22.5px;top:288.5px;font-size:25px;line-height:25px;color:#333;transform:scaleX(0.8600) translateX(-50%);transform-origin:0 0;">88</div>
</div>
<div class="a" style="left:20.0px;top:808.8px;width:45.5px;height:2.4px;background:#c9c9c9;"></div>
<div class="a" style="left:20.0px;top:448.0px;width:46.0px;height:1468.0px;overflow:hidden;">
<div class="t" style="left:22.5px;top:332.5px;font-size:25px;line-height:25px;color:#333;transform:scaleX(0.8600) translateX(-50%);transform-origin:0 0;">89</div>
</div>
<div class="a" style="left:20.0px;top:852.8px;width:45.5px;height:2.4px;background:#c9c9c9;"></div>
<div class="a" style="left:20.0px;top:448.0px;width:46.0px;height:1468.0px;overflow:hidden;">
<div class="t" style="left:22.5px;top:376.5px;font-size:25px;line-height:25px;color:#333;transform:scaleX(0.8600) translateX(-50%);transform-origin:0 0;">90</div>
</div>
<div class="a" style="left:20.0px;top:896.8px;width:45.5px;height:2.4px;background:#c9c9c9;"></div>
<div class="a" style="left:20.0px;top:448.0px;width:46.0px;height:1468.0px;overflow:hidden;">
<div class="t" style="left:22.5px;top:420.5px;font-size:25px;line-height:25px;color:#333;transform:scaleX(0.8600) translateX(-50%);transform-origin:0 0;">91</div>
</div>
<div class="a" style="left:20.0px;top:940.8px;width:45.5px;height:2.4px;background:#c9c9c9;"></div>
<div class="a" style="left:20.0px;top:448.0px;width:46.0px;height:1468.0px;overflow:hidden;">
<div class="t" style="left:22.5px;top:464.5px;font-size:25px;line-height:25px;color:#333;transform:scaleX(0.8600) translateX(-50%);transform-origin:0 0;">92</div>
</div>
<div class="a" style="left:20.0px;top:984.8px;width:45.5px;height:2.4px;background:#c9c9c9;"></div>
<div class="a" style="left:20.0px;top:448.0px;width:46.0px;height:1468.0px;overflow:hidden;">
<div class="t" style="left:22.5px;top:508.5px;font-size:25px;line-height:25px;color:#333;transform:scaleX(0.8600) translateX(-50%);transform-origin:0 0;">93</div>
</div>
<div class="a" style="left:20.0px;top:1021.2px;width:45.5px;height:2.4px;background:#c9c9c9;"></div>
<div class="a" style="left:20.0px;top:448.0px;width:46.0px;height:1468.0px;overflow:hidden;">
<div class="t" style="left:22.5px;top:544.9px;font-size:25px;line-height:25px;color:#333;transform:scaleX(0.8600) translateX(-50%);transform-origin:0 0;">94</div>
</div>
<div class="a" style="left:20.0px;top:1057.5px;width:45.5px;height:2.4px;background:#c9c9c9;"></div>
<div class="a" style="left:20.0px;top:448.0px;width:46.0px;height:1468.0px;overflow:hidden;">
<div class="t" style="left:22.5px;top:581.2px;font-size:25px;line-height:25px;color:#333;transform:scaleX(0.8600) translateX(-50%);transform-origin:0 0;">95</div>
</div>
<div class="a" style="left:20.0px;top:1202.5px;width:45.5px;height:2.4px;background:#c9c9c9;"></div>
<div class="a" style="left:20.0px;top:448.0px;width:46.0px;height:1468.0px;overflow:hidden;">
<div class="t" style="left:22.5px;top:726.2px;font-size:25px;line-height:25px;color:#333;transform:scaleX(0.8600) translateX(-50%);transform-origin:0 0;">96</div>
</div>
<div class="a" style="left:20.0px;top:1238.9px;width:45.5px;height:2.4px;background:#c9c9c9;"></div>
<div class="a" style="left:20.0px;top:448.0px;width:46.0px;height:1468.0px;overflow:hidden;">
<div class="t" style="left:22.5px;top:762.5px;font-size:25px;line-height:25px;color:#333;transform:scaleX(0.8600) translateX(-50%);transform-origin:0 0;">97</div>
</div>
<div class="a" style="left:20.0px;top:1275.2px;width:45.5px;height:2.4px;background:#c9c9c9;"></div>
<div class="a" style="left:20.0px;top:448.0px;width:46.0px;height:1468.0px;overflow:hidden;">
<div class="t" style="left:22.5px;top:798.9px;font-size:25px;line-height:25px;color:#333;transform:scaleX(0.8600) translateX(-50%);transform-origin:0 0;">98</div>
</div>
<div class="a" style="left:20.0px;top:1311.6px;width:45.5px;height:2.4px;background:#c9c9c9;"></div>
<div class="a" style="left:20.0px;top:448.0px;width:46.0px;height:1468.0px;overflow:hidden;">
<div class="t" style="left:22.5px;top:835.3px;font-size:25px;line-height:25px;color:#333;transform:scaleX(0.8600) translateX(-50%);transform-origin:0 0;">99</div>
</div>
<div class="a" style="left:20.0px;top:1348.0px;width:45.5px;height:2.4px;background:#c9c9c9;"></div>
<div class="a" style="left:20.0px;top:448.0px;width:46.0px;height:1468.0px;overflow:hidden;">
<div class="t" style="left:22.5px;top:871.6px;font-size:25px;line-height:25px;color:#333;transform:scaleX(0.8600) translateX(-50%);transform-origin:0 0;">100</div>
</div>
<div class="a" style="left:20.0px;top:1384.3px;width:45.5px;height:2.4px;background:#c9c9c9;"></div>
<div class="a" style="left:20.0px;top:448.0px;width:46.0px;height:1468.0px;overflow:hidden;">
<div class="t" style="left:22.5px;top:908.0px;font-size:25px;line-height:25px;color:#333;transform:scaleX(0.8600) translateX(-50%);transform-origin:0 0;">101</div>
</div>
<div class="a" style="left:20.0px;top:1420.7px;width:45.5px;height:2.4px;background:#c9c9c9;"></div>
<div class="a" style="left:20.0px;top:448.0px;width:46.0px;height:1468.0px;overflow:hidden;">
<div class="t" style="left:22.5px;top:944.4px;font-size:25px;line-height:25px;color:#333;transform:scaleX(0.8600) translateX(-50%);transform-origin:0 0;">102</div>
</div>
<div class="a" style="left:20.0px;top:1457.1px;width:45.5px;height:2.4px;background:#c9c9c9;"></div>
<div class="a" style="left:20.0px;top:448.0px;width:46.0px;height:1468.0px;overflow:hidden;">
<div class="t" style="left:22.5px;top:980.7px;font-size:25px;line-height:25px;color:#333;transform:scaleX(0.8600) translateX(-50%);transform-origin:0 0;">103</div>
</div>
<div class="a" style="left:20.0px;top:1493.5px;width:45.5px;height:2.4px;background:#c9c9c9;"></div>
<div class="a" style="left:20.0px;top:448.0px;width:46.0px;height:1468.0px;overflow:hidden;">
<div class="t" style="left:22.5px;top:1017.1px;font-size:25px;line-height:25px;color:#333;transform:scaleX(0.8600) translateX(-50%);transform-origin:0 0;">104</div>
</div>
<div class="a" style="left:20.0px;top:1529.8px;width:45.5px;height:2.4px;background:#c9c9c9;"></div>
<div class="a" style="left:20.0px;top:448.0px;width:46.0px;height:1468.0px;overflow:hidden;">
<div class="t" style="left:22.5px;top:1053.5px;font-size:25px;line-height:25px;color:#333;transform:scaleX(0.8600) translateX(-50%);transform-origin:0 0;">105</div>
</div>
<div class="a" style="left:20.0px;top:1566.2px;width:45.5px;height:2.4px;background:#c9c9c9;"></div>
<div class="a" style="left:20.0px;top:448.0px;width:46.0px;height:1468.0px;overflow:hidden;">
<div class="t" style="left:22.5px;top:1089.8px;font-size:25px;line-height:25px;color:#333;transform:scaleX(0.8600) translateX(-50%);transform-origin:0 0;">106</div>
</div>
<div class="a" style="left:20.0px;top:1602.6px;width:45.5px;height:2.4px;background:#c9c9c9;"></div>
<div class="a" style="left:20.0px;top:448.0px;width:46.0px;height:1468.0px;overflow:hidden;">
<div class="t" style="left:22.5px;top:1126.2px;font-size:25px;line-height:25px;color:#333;transform:scaleX(0.8600) translateX(-50%);transform-origin:0 0;">107</div>
</div>
<div class="a" style="left:20.0px;top:1638.9px;width:45.5px;height:2.4px;background:#c9c9c9;"></div>
<div class="a" style="left:20.0px;top:448.0px;width:46.0px;height:1468.0px;overflow:hidden;">
<div class="t" style="left:22.5px;top:1162.6px;font-size:25px;line-height:25px;color:#333;transform:scaleX(0.8600) translateX(-50%);transform-origin:0 0;">108</div>
</div>
<div class="a" style="left:20.0px;top:1675.3px;width:45.5px;height:2.4px;background:#c9c9c9;"></div>
<div class="a" style="left:20.0px;top:448.0px;width:46.0px;height:1468.0px;overflow:hidden;">
<div class="t" style="left:22.5px;top:1199.0px;font-size:25px;line-height:25px;color:#333;transform:scaleX(0.8600) translateX(-50%);transform-origin:0 0;">109</div>
</div>
<div class="a" style="left:20.0px;top:1711.7px;width:45.5px;height:2.4px;background:#c9c9c9;"></div>
<div class="a" style="left:20.0px;top:448.0px;width:46.0px;height:1468.0px;overflow:hidden;">
<div class="t" style="left:22.5px;top:1235.3px;font-size:25px;line-height:25px;color:#333;transform:scaleX(0.8600) translateX(-50%);transform-origin:0 0;">110</div>
</div>
<div class="a" style="left:20.0px;top:1748.0px;width:45.5px;height:2.4px;background:#c9c9c9;"></div>
<div class="a" style="left:20.0px;top:448.0px;width:46.0px;height:1468.0px;overflow:hidden;">
<div class="t" style="left:22.5px;top:1271.7px;font-size:25px;line-height:25px;color:#333;transform:scaleX(0.8600) translateX(-50%);transform-origin:0 0;">111</div>
</div>
<div class="a" style="left:20.0px;top:1784.4px;width:45.5px;height:2.4px;background:#c9c9c9;"></div>
<div class="a" style="left:20.0px;top:448.0px;width:46.0px;height:1468.0px;overflow:hidden;">
<div class="t" style="left:22.5px;top:1308.1px;font-size:25px;line-height:25px;color:#333;transform:scaleX(0.8600) translateX(-50%);transform-origin:0 0;">112</div>
</div>
<div class="a" style="left:20.0px;top:1820.8px;width:45.5px;height:2.4px;background:#c9c9c9;"></div>
<div class="a" style="left:20.0px;top:448.0px;width:46.0px;height:1468.0px;overflow:hidden;">
<div class="t" style="left:22.5px;top:1344.4px;font-size:25px;line-height:25px;color:#333;transform:scaleX(0.8600) translateX(-50%);transform-origin:0 0;">113</div>
</div>
<div class="a" style="left:20.0px;top:1857.2px;width:45.5px;height:2.4px;background:#c9c9c9;"></div>
<div class="a" style="left:20.0px;top:448.0px;width:46.0px;height:1468.0px;overflow:hidden;">
<div class="t" style="left:22.5px;top:1380.8px;font-size:25px;line-height:25px;color:#333;transform:scaleX(0.8600) translateX(-50%);transform-origin:0 0;">114</div>
</div>
<div class="a" style="left:20.0px;top:1893.5px;width:45.5px;height:2.4px;background:#c9c9c9;"></div>
<div class="a" style="left:20.0px;top:448.0px;width:46.0px;height:1468.0px;overflow:hidden;">
<div class="t" style="left:22.5px;top:1417.2px;font-size:25px;line-height:25px;color:#333;transform:scaleX(0.8600) translateX(-50%);transform-origin:0 0;">115</div>
</div>
<div class="a" style="left:20.0px;top:1929.9px;width:45.5px;height:2.4px;background:#c9c9c9;"></div>
<div class="a" style="left:20.0px;top:448.0px;width:46.0px;height:1468.0px;overflow:hidden;">
<div class="t" style="left:22.5px;top:1453.5px;font-size:25px;line-height:25px;color:#333;transform:scaleX(0.8600) translateX(-50%);transform-origin:0 0;">116</div>
</div>
<div class="a" style="left:64.0px;top:418.0px;width:3.0px;height:1498.0px;background:#bdbdbd;"></div>
<div class="a" style="left:20.0px;top:418.0px;width:3627.0px;height:30.0px;background:#e6e6e6;"></div>
<div class="a" style="left:184.0px;top:417.0px;width:398.5px;height:31.0px;background:#d2d2d2;"></div>
<div class="a" style="left:183.0px;top:418.0px;width:2.0px;height:30.0px;background:#c6c6c6;"></div>
<div class="t" style="left:124.8px;top:419.6px;font-size:24px;line-height:24px;color:#333;transform:scaleX(0.9000) translateX(-50%);transform-origin:0 0;">A</div>
<div class="a" style="left:581.5px;top:418.0px;width:2.0px;height:30.0px;background:#c6c6c6;"></div>
<div class="t" style="left:383.2px;top:419.6px;font-size:24px;line-height:24px;color:#1e6b3e;transform:scaleX(0.9000) translateX(-50%);transform-origin:0 0;">B</div>
<div class="a" style="left:1443.0px;top:418.0px;width:2.0px;height:30.0px;background:#c6c6c6;"></div>
<div class="t" style="left:1013.2px;top:419.6px;font-size:24px;line-height:24px;color:#333;transform:scaleX(0.9000) translateX(-50%);transform-origin:0 0;">C</div>
<div class="a" style="left:2529.5px;top:418.0px;width:2.0px;height:30.0px;background:#c6c6c6;"></div>
<div class="t" style="left:1987.2px;top:419.6px;font-size:24px;line-height:24px;color:#333;transform:scaleX(0.9000) translateX(-50%);transform-origin:0 0;">D</div>
<div class="a" style="left:2640.0px;top:418.0px;width:2.0px;height:30.0px;background:#c6c6c6;"></div>
<div class="t" style="left:2585.8px;top:419.6px;font-size:24px;line-height:24px;color:#333;transform:scaleX(0.9000) translateX(-50%);transform-origin:0 0;">E</div>
<div class="a" style="left:2835.0px;top:418.0px;width:2.0px;height:30.0px;background:#c6c6c6;"></div>
<div class="t" style="left:2738.5px;top:419.6px;font-size:24px;line-height:24px;color:#333;transform:scaleX(0.9000) translateX(-50%);transform-origin:0 0;">F</div>
<div class="a" style="left:3091.0px;top:418.0px;width:2.0px;height:30.0px;background:#c6c6c6;"></div>
<div class="t" style="left:2964.0px;top:419.6px;font-size:24px;line-height:24px;color:#333;transform:scaleX(0.9000) translateX(-50%);transform-origin:0 0;">G</div>
<div class="a" style="left:3326.5px;top:418.0px;width:2.0px;height:30.0px;background:#c6c6c6;"></div>
<div class="t" style="left:3209.8px;top:419.6px;font-size:24px;line-height:24px;color:#333;transform:scaleX(0.9000) translateX(-50%);transform-origin:0 0;">H</div>
<div class="a" style="left:3594.5px;top:418.0px;width:2.0px;height:30.0px;background:#c6c6c6;"></div>
<div class="t" style="left:3461.5px;top:419.6px;font-size:24px;line-height:24px;color:#333;transform:scaleX(0.9000) translateX(-50%);transform-origin:0 0;">I</div>
<div class="a" style="left:64.5px;top:416.0px;width:2.0px;height:32.0px;background:#c6c6c6;"></div>
<div class="a" style="left:64.0px;top:416.0px;width:3.0px;height:3.0px;background:#aaaaaa;"></div>
<div class="a" style="left:20.0px;top:447.0px;width:3627.0px;height:2.5px;background:#bdbdbd;"></div>
<div class="a" style="left:184.0px;top:446.0px;width:398.5px;height:3.5px;background:#1b7a45;"></div>
<svg class="a" style="left:42.0px;top:425.0px;" width="18" height="17" viewBox="0 0 18 17"><path d="M18 0V17H0Z" fill="#c3c3c3"/></svg>
<div class="a" style="left:3647.0px;top:418.0px;width:43.0px;height:1498.0px;background:#e6e6e6;"></div>
<div class="a" style="left:3653.5px;top:449.0px;width:28.5px;height:1440.0px;background:#f1f1f1;"></div>
<div class="a" style="left:3653.5px;top:420.6px;width:28.5px;height:28.7px;background:#fff;box-sizing:border-box;border:1.5px solid #c6c6c6;"></div>
<svg class="a" style="left:3660.0px;top:429.0px;" width="16" height="10" viewBox="0 0 16 10"><path d="M1 9H15L8 1Z" fill="#222"/></svg>
<div class="a" style="left:3653.5px;top:620.6px;width:28.5px;height:80.4px;background:#fff;box-sizing:border-box;border:1.5px solid #c6c6c6;"></div>
<div class="a" style="left:3653.5px;top:1889.5px;width:28.5px;height:26.5px;background:#fff;box-sizing:border-box;border:1.5px solid #c6c6c6;"></div>
<svg class="a" style="left:3660.0px;top:1898.0px;" width="16" height="10" viewBox="0 0 16 10"><path d="M1 1H15L8 9Z" fill="#222"/></svg>
<div class="a" style="left:3646.0px;top:449.0px;width:2.0px;height:1467.0px;background:#bdbdbd;"></div>
<div class="a" style="left:20.0px;top:1916.0px;width:3670.0px;height:54.0px;background:#e6e6e6;"></div>
<div class="a" style="left:20.0px;top:1915.0px;width:3627.0px;height:2.0px;background:#bdbdbd;"></div>
<svg class="a" style="left:66.0px;top:1932.0px;" width="12" height="18" viewBox="0 0 12 18"><path d="M10 1V17L1 9Z" fill="#bbb"/></svg>
<svg class="a" style="left:122.0px;top:1932.0px;" width="12" height="18" viewBox="0 0 12 18"><path d="M2 1V17L11 9Z" fill="#bbb"/></svg>
<div class="a" style="left:209.0px;top:1916.0px;width:197.4px;height:47.6px;background:#fff;border-left:1.5px solid #bdbdbd;border-right:1.5px solid #bdbdbd;box-sizing:border-box;"></div>
<div class="a" style="left:209.0px;top:1960.0px;width:197.4px;height:3.6px;background:#107c41;"></div>
<div class="t" style="left:232.0px;top:1929.6px;font-size:24px;line-height:24px;color:#107c41;font-weight:bold;transform:scaleX(1.0223);transform-origin:0 0;">Master sheet</div>
<div class="t" style="left:430.0px;top:1929.6px;font-size:24px;line-height:24px;color:#444;transform:scaleX(1.0929);transform-origin:0 0;">#export</div>
<div class="a" style="left:541.0px;top:1924.0px;width:2.0px;height:37.0px;background:#c4c4c4;"></div>
<svg class="a" style="left:604.5px;top:1926.0px;" width="32" height="32" viewBox="0 0 32 32"><circle cx="16" cy="16" r="14.5" fill="none" stroke="#666" stroke-width="2"/><path d="M16 8V24M8 16H24" stroke="#666" stroke-width="2.2"/></svg>
<div class="a" style="left:2220.5px;top:1934.0px;width:2.4px;height:3.4px;background:#aaa;"></div>
<div class="a" style="left:2220.5px;top:1941.0px;width:2.4px;height:3.4px;background:#aaa;"></div>
<div class="a" style="left:2220.5px;top:1948.0px;width:2.4px;height:3.4px;background:#aaa;"></div>
<div class="a" style="left:2253.0px;top:1928.5px;width:1394.0px;height:29.2px;background:#f3f3f3;"></div>
<div class="a" style="left:2253.0px;top:1928.5px;width:27.5px;height:29.2px;background:#fff;box-sizing:border-box;border:1.5px solid #c6c6c6;"></div>
<svg class="a" style="left:2261.0px;top:1936.0px;" width="10" height="14" viewBox="0 0 10 14"><path d="M9 1V13L1 7Z" fill="#222"/></svg>
<div class="a" style="left:2279.5px;top:1928.5px;width:511.0px;height:29.2px;background:#fff;box-sizing:border-box;border:1.5px solid #c6c6c6;"></div>
<div class="a" style="left:3619.0px;top:1928.5px;width:28.5px;height:29.2px;background:#fff;box-sizing:border-box;border:1.5px solid #c6c6c6;"></div>
<svg class="a" style="left:3629.0px;top:1936.0px;" width="10" height="14" viewBox="0 0 10 14"><path d="M1 1V13L9 7Z" fill="#222"/></svg>
<div class="a" style="left:20.0px;top:1968.0px;width:3670.0px;height:2.0px;background:#d6d6d6;"></div>
<div class="a" style="left:20.0px;top:1970.0px;width:3670.0px;height:41.0px;background:#f3f2f1;"></div>
<div class="t" style="left:31.2px;top:1980.3px;font-size:22px;line-height:22px;color:#444;transform:scaleX(0.9183);transform-origin:0 0;">Ready</div>
<svg class="a" style="left:126.0px;top:1975.0px;" width="32" height="32" viewBox="0 0 32 32"><g fill="none" stroke="#555" stroke-width="1.8"><circle cx="14" cy="6" r="3.5"/><path d="M3 12H25M14 10V20L8 30M14 20L18 26"/><path d="M20 20L30 30M30 20L20 30"/></g></svg>
<div class="t" style="left:163.0px;top:1980.3px;font-size:22px;line-height:22px;color:#444;transform:scaleX(0.9814);transform-origin:0 0;">Accessibility: Investigate</div>
<div class="a" style="left:3115.0px;top:1971.0px;width:74.5px;height:38.0px;background:#d6d4d2;"></div>
<svg class="a" style="left:3138.0px;top:1977.0px;" width="28" height="26" viewBox="0 0 28 26"><g fill="none" stroke="#444" stroke-width="1.8"><rect x="2" y="2" width="24" height="22"/><path d="M2 9H26M2 17H26M10 2V24M18 2V24"/></g></svg>
<svg class="a" style="left:3215.0px;top:1977.0px;" width="28" height="26" viewBox="0 0 28 26"><g fill="none" stroke="#444" stroke-width="1.8"><rect x="2" y="2" width="24" height="22"/><rect x="7" y="6" width="14" height="14"/><path d="M10 10H18M10 13H18M10 16H18"/></g></svg>
<svg class="a" style="left:3291.0px;top:1977.0px;" width="28" height="26" viewBox="0 0 28 26"><g fill="none" stroke="#444" stroke-width="1.8"><path d="M2 2H26V24H2Z"/><path d="M10 2V12H18V2"/></g></svg>
<div class="a" style="left:3356.0px;top:1989.0px;width:13.0px;height:2.0px;background:#555;"></div>
<div class="a" style="left:3379.5px;top:1989.5px;width:191.0px;height:1.6px;background:#666;"></div>
<div class="a" style="left:3461.0px;top:1978.0px;width:10.0px;height:22.0px;background:#444;"></div>
<div class="a" style="left:3475.0px;top:1984.0px;width:1.5px;height:12.0px;background:#666;"></div>
<div class="a" style="left:3581.0px;top:1989.5px;width:14.0px;height:1.8px;background:#555;"></div>
<div class="a" style="left:3587.2px;top:1983.0px;width:1.8px;height:14.0px;background:#555;"></div>
<div class="t" style="left:3619.0px;top:1981.0px;font-size:20px;line-height:20px;color:#5a5a5a;transform:scaleX(1.0742);transform-origin:0 0;">90%</div>
<div class="a" style="left:20.0px;top:2011.0px;width:3670.0px;height:15.0px;background:#1c1c1c;"></div>
<div class="a" style="left:713.0px;top:2011.0px;width:91.0px;height:15.0px;background:#3d3d3d;"></div>
<div class="a" style="left:3400.0px;top:2011.0px;width:290.0px;height:15.0px;overflow:hidden;">
<div class="t" style="left:124.0px;top:10.3px;font-size:22px;line-height:22px;color:#fff;transform:translateX(-50%);">9:55 AM</div>
</div>
<div class="a" style="left:3678.0px;top:2011.0px;width:1.5px;height:15.0px;background:#777;"></div>
</body></html>
